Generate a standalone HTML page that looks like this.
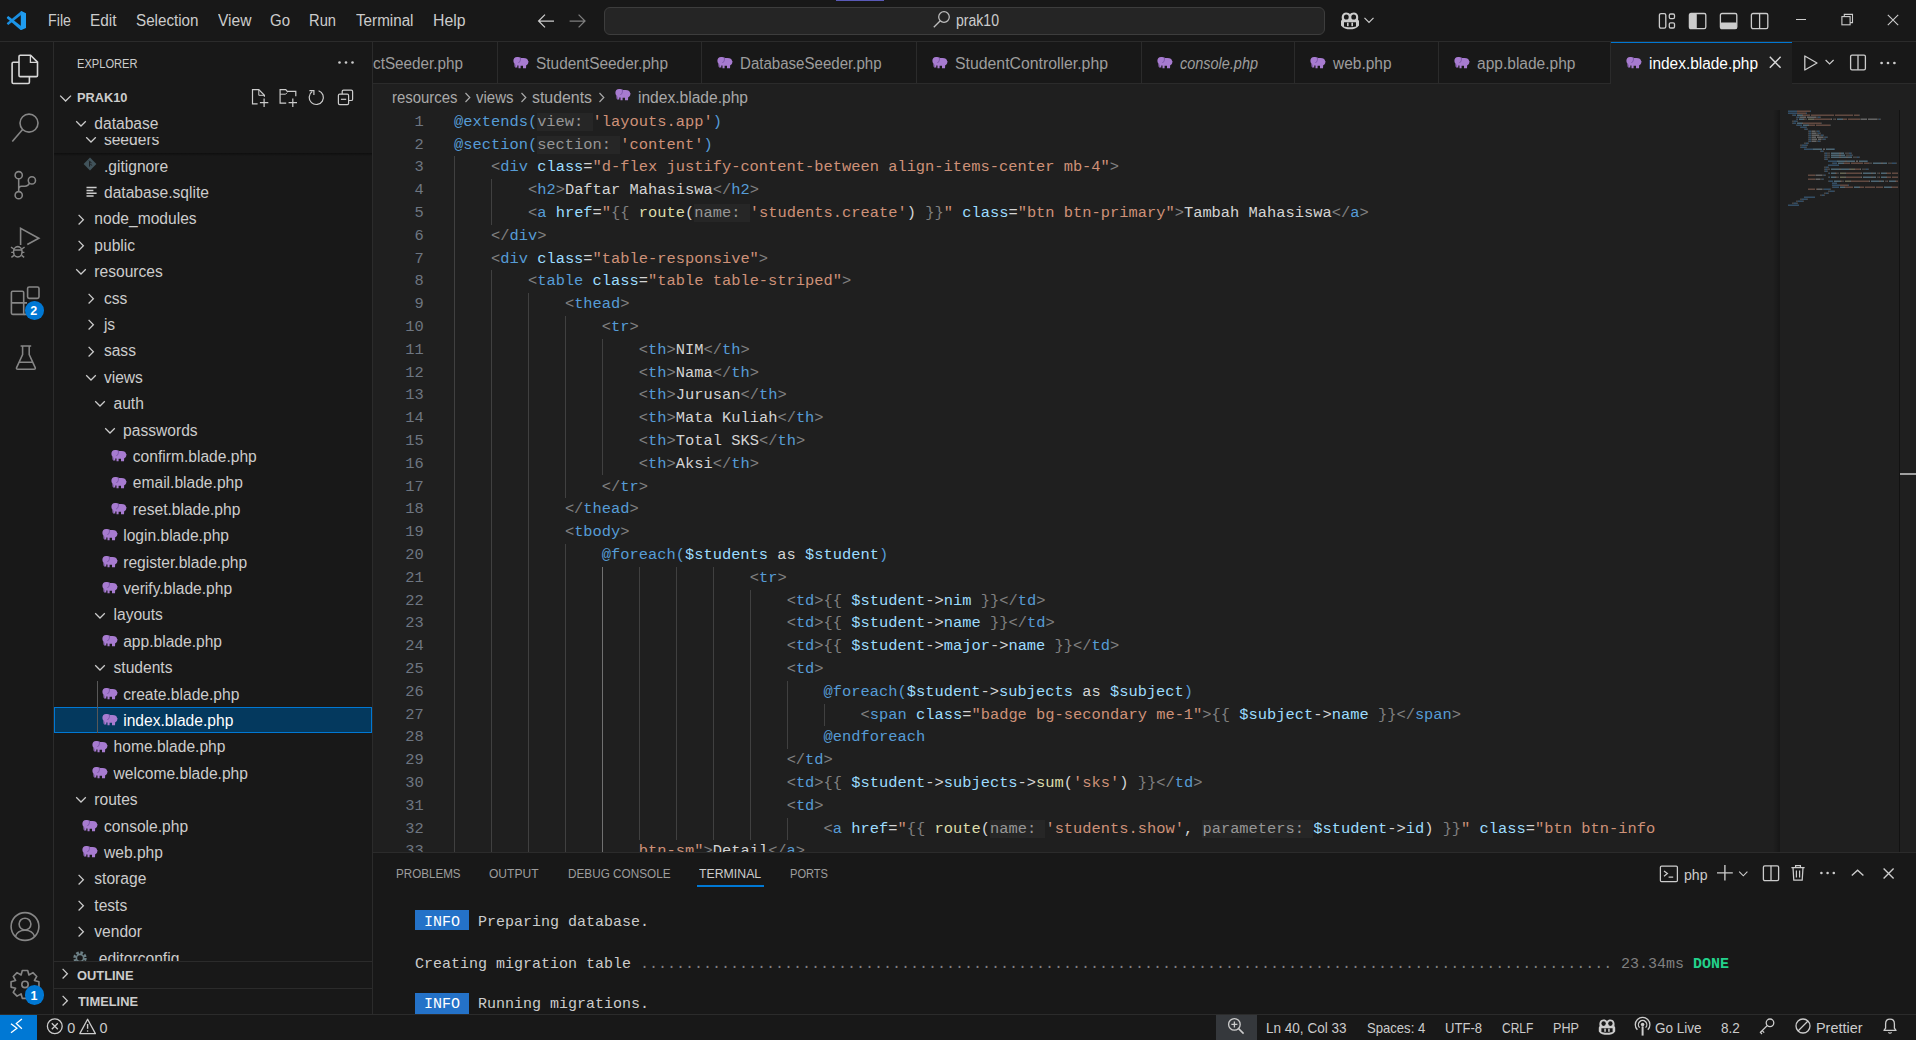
<!DOCTYPE html>
<html><head><meta charset="utf-8"><title>VS Code</title>
<style>
*{margin:0;padding:0;box-sizing:border-box}
html,body{width:1916px;height:1040px;overflow:hidden;background:#181818;font-family:'Liberation Sans',sans-serif;color:#cccccc}
.t{position:absolute;white-space:pre}
.r{position:absolute}
.s{position:absolute;overflow:visible}
.clip{position:absolute;overflow:hidden}
</style></head><body>
<div class="r" style="left:0px;top:0px;width:1916px;height:1040px;background:#181818;"></div><div class="r" style="left:373px;top:84px;width:1543px;height:768px;background:#1f1f1f;"></div><div class="r" style="left:0px;top:41px;width:1916px;height:1px;background:#2b2b2b;"></div><div class="r" style="left:53px;top:42px;width:1px;height:972px;background:#2b2b2b;"></div><div class="r" style="left:372px;top:42px;width:1px;height:972px;background:#2b2b2b;"></div><div class="r" style="left:373px;top:852px;width:1543px;height:1px;background:#2b2b2b;"></div><div class="r" style="left:0px;top:1014px;width:1916px;height:1px;background:#2b2b2b;"></div><svg class="s" style="left:4px;top:8px;" width="26" height="26" viewBox="0 0 26 26"><g stroke-linecap="butt"><path d="M16.8 3.2 L17.4 2.9 L22 5.2 L22 19.9 L17.4 21.9 L16.8 21.6 Z" fill="#1f9cf0"/><path d="M17.4 2.9 L17.4 6.7 L4.3 17.1 L2.9 15.8 L2.9 14.9 Z" fill="#1a8ee0"/><path d="M2.9 9.3 L4.3 8.0 L17.4 18.2 L17.4 21.9 L16.6 21.9 L2.9 10.2 Z" fill="#1b95e8"/></g></svg><div class="t" style="left:47.80px;top:13.09px;font-size:15.6px;line-height:15.6px;color:#cccccc;transform:scaleX(0.9149);transform-origin:0 0">File</div><div class="t" style="left:90.40px;top:13.09px;font-size:15.6px;line-height:15.6px;color:#cccccc;transform:scaleX(0.9860);transform-origin:0 0">Edit</div><div class="t" style="left:135.50px;top:13.09px;font-size:15.6px;line-height:15.6px;color:#cccccc;transform:scaleX(0.9742);transform-origin:0 0">Selection</div><div class="t" style="left:217.70px;top:13.09px;font-size:15.6px;line-height:15.6px;color:#cccccc;transform:scaleX(0.9991);transform-origin:0 0">View</div><div class="t" style="left:269.60px;top:13.09px;font-size:15.6px;line-height:15.6px;color:#cccccc;transform:scaleX(0.9610);transform-origin:0 0">Go</div><div class="t" style="left:309.00px;top:13.09px;font-size:15.6px;line-height:15.6px;color:#cccccc;transform:scaleX(0.9437);transform-origin:0 0">Run</div><div class="t" style="left:355.60px;top:13.09px;font-size:15.6px;line-height:15.6px;color:#cccccc;transform:scaleX(0.9756);transform-origin:0 0">Terminal</div><div class="t" style="left:432.50px;top:13.09px;font-size:15.6px;line-height:15.6px;color:#cccccc;transform:scaleX(1.0132);transform-origin:0 0">Help</div><div class="r" style="left:836px;top:0px;width:48px;height:1.3px;background:#5a5ab8;"></div><svg class="s" style="left:536px;top:12px;" width="22" height="18" viewBox="0 0 22 18"><path d="M9 2.6 L2.6 9 L9 15.4 M2.6 9 H18" fill="none" stroke="#cccccc" stroke-width="1.25"/></svg><svg class="s" style="left:567px;top:12px;" width="22" height="18" viewBox="0 0 22 18"><path d="M11.6 2.6 L18 9 L11.6 15.4 M18 9 H2.6" fill="none" stroke="#7e7e7e" stroke-width="1.25"/></svg><div class="r" style="left:603.5px;top:6.5px;width:721px;height:28px;background:#252525;border:1px solid #3d3d3d;border-radius:6px"></div><svg class="s" style="left:930px;top:9px;" width="22" height="22" viewBox="0 0 22 22"><circle cx="14" cy="8" r="5.3" fill="none" stroke="#bdbdbd" stroke-width="1.25"/><path d="M10.3 11.7 L3.8 18.2" stroke="#bdbdbd" stroke-width="1.3" fill="none"/></svg><div class="t" style="left:955.50px;top:12.99px;font-size:15.6px;line-height:15.6px;color:#cccccc;transform:scaleX(0.9017);transform-origin:0 0">prak10</div><svg class="s" style="left:1338px;top:10px;" width="24" height="21" viewBox="0 0 24 21"><path d="M4 9.5 C3 5.5 5 2.5 8 2.5 C10 2.5 11.5 3.2 12 4.3 C12.5 3.2 14 2.5 16 2.5 C19 2.5 21 5.5 20 9.5 L21 11 L21 15.5 C19 18.5 15.5 19.3 12 19.3 C8.5 19.3 5 18.5 3 15.5 L3 11 Z" fill="#cccccc"/><ellipse cx="8.3" cy="7" rx="2.4" ry="2.6" fill="#181818"/><ellipse cx="15.7" cy="7" rx="2.4" ry="2.6" fill="#181818"/><path d="M6 12.2 H18 V16.5 C15.5 17.6 8.5 17.6 6 16.5 Z" fill="#181818"/><rect x="9" y="12.6" width="1.6" height="3.6" fill="#cccccc"/><rect x="13.4" y="12.6" width="1.6" height="3.6" fill="#cccccc"/></svg><svg class="s" style="left:1362px;top:14px;" width="14" height="12" viewBox="0 0 14 12"><path d="M2.5 3.8 L7 8.3 L11.5 3.8" fill="none" stroke="#cccccc" stroke-width="1.2"/></svg><svg class="s" style="left:1656px;top:10px;" width="22" height="21" viewBox="0 0 22 21"><rect x="3.4" y="3.6" width="6.4" height="14.6" rx="1.6" fill="none" stroke="#cccccc" stroke-width="1.3"/><rect x="13.3" y="4" width="5.2" height="4.6" rx="1.3" fill="none" stroke="#cccccc" stroke-width="1.3"/><rect x="13.3" y="12.8" width="5.2" height="5.2" rx="1.3" fill="none" stroke="#cccccc" stroke-width="1.3"/></svg><svg class="s" style="left:1686px;top:10px;" width="22" height="21" viewBox="0 0 22 21"><rect x="3.4" y="3.5" width="16.4" height="15.2" rx="1.6" fill="none" stroke="#cccccc" stroke-width="1.3"/><rect x="3.4" y="3.5" width="7.4" height="15.2" rx="1.2" fill="#cccccc"/></svg><svg class="s" style="left:1717px;top:10px;" width="22" height="21" viewBox="0 0 22 21"><rect x="3.4" y="3.5" width="16.4" height="15.2" rx="1.6" fill="none" stroke="#cccccc" stroke-width="1.3"/><rect x="3.4" y="12.6" width="16.4" height="6.1" rx="1.2" fill="#cccccc"/></svg><svg class="s" style="left:1748px;top:10px;" width="22" height="21" viewBox="0 0 22 21"><rect x="3.4" y="3.5" width="16.4" height="15.2" rx="1.6" fill="none" stroke="#cccccc" stroke-width="1.3"/><path d="M11.6 3.5 V18.7" stroke="#cccccc" stroke-width="1.3"/></svg><div class="r" style="left:1796px;top:19px;width:10.2px;height:1.2px;background:#cccccc;"></div><svg class="s" style="left:1840px;top:12px;" width="16" height="16" viewBox="0 0 16 16"><rect x="1.9" y="4.6" width="8.2" height="8.2" fill="none" stroke="#cccccc" stroke-width="1.1"/><path d="M4.3 4.6 V2.4 H12.5 V10.6 H10.1" fill="none" stroke="#cccccc" stroke-width="1.1"/></svg><svg class="s" style="left:1886px;top:13px;" width="14" height="14" viewBox="0 0 14 14"><path d="M1.8 1.8 L12.2 12.2 M12.2 1.8 L1.8 12.2" stroke="#cccccc" stroke-width="1.1"/></svg><svg class="s" style="left:8px;top:52px;" width="34" height="34" viewBox="0 0 34 34"><path d="M11 10.2 H5.3 Q4.1 10.2 4.1 11.4 V30.3 Q4.1 31.5 5.3 31.5 H20.2 Q21.4 31.5 21.4 30.3 V24.6" fill="none" stroke="#d7d7d7" stroke-width="1.6"/><path d="M12.2 3.3 H22.6 L29.5 10.2 V23.4 Q29.5 24.6 28.3 24.6 H12.2 Q11 24.6 11 23.4 V4.5 Q11 3.3 12.2 3.3 Z" fill="none" stroke="#d7d7d7" stroke-width="1.6"/><path d="M22.4 3.4 V10.4 H29.4" fill="none" stroke="#d7d7d7" stroke-width="1.3"/></svg><svg class="s" style="left:8px;top:110px;" width="34" height="34" viewBox="0 0 34 34"><circle cx="21" cy="13.1" r="9" fill="none" stroke="#868686" stroke-width="1.6"/><path d="M14.6 19.6 L4.3 31.6" stroke="#868686" stroke-width="1.6"/></svg><svg class="s" style="left:8px;top:168px;" width="34" height="34" viewBox="0 0 34 34"><circle cx="10.7" cy="7.2" r="3.6" fill="none" stroke="#868686" stroke-width="1.55"/><circle cx="23.9" cy="12.4" r="3.6" fill="none" stroke="#868686" stroke-width="1.55"/><circle cx="10.7" cy="27.2" r="3.6" fill="none" stroke="#868686" stroke-width="1.55"/><path d="M10.7 10.8 V23.6 M21.6 15.2 Q20 18.2 17 18.2 H13.4 Q11 18.2 10.7 20.6" fill="none" stroke="#868686" stroke-width="1.55"/></svg><svg class="s" style="left:8px;top:226px;" width="34" height="34" viewBox="0 0 34 34"><path d="M12.6 18.9 V2.4 L30.8 12.2 L19.3 18.5" fill="none" stroke="#868686" stroke-width="1.6" stroke-linejoin="miter"/><ellipse cx="9.8" cy="25.8" rx="4.3" ry="5.2" fill="none" stroke="#868686" stroke-width="1.55"/><path d="M5.6 24 H14 M3 21.2 L5.8 23 M16.6 21.2 L13.8 23 M3.2 26.4 H5.6 M14 26.4 H16.4 M3.4 31.4 L6 29.4 M16.2 31.4 L13.6 29.4" fill="none" stroke="#868686" stroke-width="1.4"/></svg><svg class="s" style="left:8px;top:284px;" width="34" height="34" viewBox="0 0 34 34"><path d="M3.4 8.6 Q3.4 7.3 4.7 7.3 H14.4 Q15.7 7.3 15.7 8.6 V30.4 H4.7 Q3.4 30.4 3.4 29.1 Z" fill="none" stroke="#868686" stroke-width="1.6"/><path d="M3.4 18.9 H19 M15.7 30.4 H21" fill="none" stroke="#868686" stroke-width="1.6"/><rect x="19.6" y="3" width="11.4" height="11.4" rx="1.6" fill="none" stroke="#868686" stroke-width="1.6"/></svg><div class="r" style="left:25px;top:301px;width:18.6px;height:18.6px;border-radius:50%;background:#0078d4"></div><div class="t" style="left:30.20px;top:305.02px;font-size:12.5px;line-height:12.5px;color:#ffffff;font-weight:bold;">2</div><svg class="s" style="left:10.6px;top:342px;" width="34" height="34" viewBox="0 0 34 34"><path d="M9.6 3.9 H20.2 M11.6 3.9 V12.6 L5.6 25.6 Q5 27.3 6.8 27.3 H23 Q24.8 27.3 24.2 25.6 L18.2 12.6 V3.9 M8.6 20.3 H21.2" fill="none" stroke="#868686" stroke-width="1.55"/></svg><svg class="s" style="left:8px;top:909px;" width="34" height="34" viewBox="0 0 34 34"><circle cx="17" cy="17.5" r="13.9" fill="none" stroke="#868686" stroke-width="1.6"/><circle cx="17" cy="15.1" r="5.9" fill="none" stroke="#868686" stroke-width="1.6"/><path d="M7.2 27.8 Q9.4 21.3 17 21.3 Q24.6 21.3 26.8 27.8" fill="none" stroke="#868686" stroke-width="1.6"/></svg><svg class="s" style="left:8px;top:968px;" width="34" height="34" viewBox="0 0 34 34"><path d="M30.94 13.69 L30.94 19.11 L26.42 20.30 L28.77 24.34 L24.94 28.17 L20.90 25.82 L19.71 30.34 L14.29 30.34 L13.10 25.82 L9.06 28.17 L5.23 24.34 L7.58 20.30 L3.06 19.11 L3.06 13.69 L7.58 12.50 L5.23 8.46 L9.06 4.63 L13.10 6.98 L14.29 2.46 L19.71 2.46 L20.90 6.98 L24.94 4.63 L28.77 8.46 L26.42 12.50 Z" fill="none" stroke="#868686" stroke-width="1.6" stroke-linejoin="round"/><circle cx="17" cy="16.4" r="3.2" fill="none" stroke="#868686" stroke-width="1.6"/></svg><div class="r" style="left:24.5px;top:985px;width:19.6px;height:19.6px;border-radius:50%;background:#0078d4"></div><div class="t" style="left:30.60px;top:989.62px;font-size:12.5px;line-height:12.5px;color:#ffffff;font-weight:bold;">1</div><div class="t" style="left:77.20px;top:57.02px;font-size:13.2px;line-height:13.2px;color:#cccccc;transform:scaleX(0.8423);transform-origin:0 0">EXPLORER</div><svg class="s" style="left:336px;top:56px;" width="20" height="12" viewBox="0 0 20 12"><circle cx="3.5" cy="6.5" r="1.3" fill="#cccccc"/><circle cx="10" cy="6.5" r="1.3" fill="#cccccc"/><circle cx="16.5" cy="6.5" r="1.3" fill="#cccccc"/></svg><svg class="s" style="left:58.6px;top:91.5px;" width="14" height="12" viewBox="0 0 14 12"><path d="M1.2 3.6 L6.6 9 L12 3.6" fill="none" stroke="#cccccc" stroke-width="1.3"/></svg><div class="t" style="left:77.30px;top:91.02px;font-size:13.2px;line-height:13.2px;color:#cccccc;font-weight:bold;transform:scaleX(0.9703);transform-origin:0 0">PRAK10</div><svg class="s" style="left:240px;top:82px;" width="132" height="30" viewBox="0 0 132 30"><g fill="none" stroke="#cccccc" stroke-width="1.2"><path d="M17.6 21.9 H12.5 V7.7 H18.8 L24.4 13.3 V14.8"/><path d="M18.8 7.9 V13.3 H24.2" stroke-width="1.0"/><path d="M24.1 16.5 V24.9 M19.9 20.7 H28.3"/><path d="M46.2 21.2 H40.1 V7.7 H45.8 L47.2 9.3 H55.8 V14.2"/><path d="M40.1 12.2 H45.6 L47.2 10.6" stroke-width="1.0"/><path d="M52.8 16.5 V24.9 M48.6 20.7 H57"/><path d="M72.2 9.6 A7.1 7.1 0 1 0 78.6 8.7"/><path d="M69.4 8.7 H73.9 V13.1"/><rect x="102.2" y="8.1" width="10.4" height="10.4" rx="1.3"/><rect x="98.4" y="12.2" width="10.2" height="10.4" rx="1.3" fill="#181818"/><path d="M100.9 17.3 H106.2"/></g></svg><div style="position:absolute;left:0;top:0;width:1916px;height:1040px;clip-path:inset(153px 1544px 79px 54px)"><svg class="s" style="left:81.8px;top:156.29999999999998px;" width="16" height="16" viewBox="0 0 16 16"><path d="M8 1.6 L14.4 8 L8 14.4 L1.6 8 Z" fill="#41535b"/><path d="M7 4.6 L9.6 7.2 M7.6 5.6 V10.6 M8.4 7.8 L9.8 9.6" stroke="#181818" stroke-width="0.9" fill="none"/></svg><div class="t" style="left:104.00px;top:158.59px;font-size:15.6px;line-height:15.6px;color:#cccccc;">.gitignore</div><svg class="s" style="left:85.8px;top:185.9px;" width="12" height="12" viewBox="0 0 12 12"><path d="M0.5 1.6 H10.6 M0.5 4.4 H7.4 M0.5 7.2 H10.6 M0.5 10 H7.6" stroke="#cccccc" stroke-width="1.5"/></svg><div class="t" style="left:104.00px;top:184.99px;font-size:15.6px;line-height:15.6px;color:#cccccc;">database.sqlite</div><svg class="s" style="left:75.0px;top:213.5px;" width="12" height="11" viewBox="0 0 12 11"><path d="M3.6 0.9 L8.4 5.7 L3.6 10.5" fill="none" stroke="#cccccc" stroke-width="1.25"/></svg><div class="t" style="left:94.30px;top:211.39px;font-size:15.6px;line-height:15.6px;color:#cccccc;">node_modules</div><svg class="s" style="left:75.0px;top:239.89999999999998px;" width="12" height="11" viewBox="0 0 12 11"><path d="M3.6 0.9 L8.4 5.7 L3.6 10.5" fill="none" stroke="#cccccc" stroke-width="1.25"/></svg><div class="t" style="left:94.30px;top:237.79px;font-size:15.6px;line-height:15.6px;color:#cccccc;">public</div><svg class="s" style="left:75.0px;top:266.29999999999995px;" width="12" height="11" viewBox="0 0 12 11"><path d="M1.2 3.2 L6 8 L10.8 3.2" fill="none" stroke="#cccccc" stroke-width="1.25"/></svg><div class="t" style="left:94.30px;top:264.19px;font-size:15.6px;line-height:15.6px;color:#cccccc;">resources</div><svg class="s" style="left:84.6px;top:292.7px;" width="12" height="11" viewBox="0 0 12 11"><path d="M3.6 0.9 L8.4 5.7 L3.6 10.5" fill="none" stroke="#cccccc" stroke-width="1.25"/></svg><div class="t" style="left:103.90px;top:290.59px;font-size:15.6px;line-height:15.6px;color:#cccccc;">css</div><svg class="s" style="left:84.6px;top:319.09999999999997px;" width="12" height="11" viewBox="0 0 12 11"><path d="M3.6 0.9 L8.4 5.7 L3.6 10.5" fill="none" stroke="#cccccc" stroke-width="1.25"/></svg><div class="t" style="left:103.90px;top:316.99px;font-size:15.6px;line-height:15.6px;color:#cccccc;">js</div><svg class="s" style="left:84.6px;top:345.5px;" width="12" height="11" viewBox="0 0 12 11"><path d="M3.6 0.9 L8.4 5.7 L3.6 10.5" fill="none" stroke="#cccccc" stroke-width="1.25"/></svg><div class="t" style="left:103.90px;top:343.39px;font-size:15.6px;line-height:15.6px;color:#cccccc;">sass</div><svg class="s" style="left:84.6px;top:371.9px;" width="12" height="11" viewBox="0 0 12 11"><path d="M1.2 3.2 L6 8 L10.8 3.2" fill="none" stroke="#cccccc" stroke-width="1.25"/></svg><div class="t" style="left:103.90px;top:369.79px;font-size:15.6px;line-height:15.6px;color:#cccccc;">views</div><svg class="s" style="left:94.2px;top:398.29999999999995px;" width="12" height="11" viewBox="0 0 12 11"><path d="M1.2 3.2 L6 8 L10.8 3.2" fill="none" stroke="#cccccc" stroke-width="1.25"/></svg><div class="t" style="left:113.50px;top:396.19px;font-size:15.6px;line-height:15.6px;color:#cccccc;">auth</div><svg class="s" style="left:103.8px;top:424.7px;" width="12" height="11" viewBox="0 0 12 11"><path d="M1.2 3.2 L6 8 L10.8 3.2" fill="none" stroke="#cccccc" stroke-width="1.25"/></svg><div class="t" style="left:123.10px;top:422.59px;font-size:15.6px;line-height:15.6px;color:#cccccc;">passwords</div><svg class="s" style="left:111.1px;top:450.19999999999993px;" width="16" height="12" viewBox="0 0 16 12"><path d="M4 0 C1.8 0 0.4 1.6 0.4 3.8 C0.4 5 0.9 6 1.4 6.6 L1.6 9.6 L2.4 10.6 L4.3 10.6 L4.3 8.6 L5.5 8.6 L5.5 11.2 L7.6 11.2 L7.6 8.8 L10 8.8 L10 11.2 L13 11.2 L13.2 8.2 C14.6 7.6 15.3 6.4 15.3 5.2 L15.8 4.8 L15.2 4.2 C14.8 2.2 13.4 1 10.5 1 L8 1 C7 0.3 5.6 0 4 0 Z" fill="#a77bd0"/><path d="M7.3 0.8 C7.7 2.6 7.3 4.6 5.4 6" fill="none" stroke="#7650a4" stroke-width="0.9"/><path d="M2.4 7.6 L2.5 10.4" fill="none" stroke="#6e4c98" stroke-width="0.6"/></svg><div class="t" style="left:132.80px;top:448.99px;font-size:15.6px;line-height:15.6px;color:#cccccc;">confirm.blade.php</div><svg class="s" style="left:111.1px;top:476.5999999999999px;" width="16" height="12" viewBox="0 0 16 12"><path d="M4 0 C1.8 0 0.4 1.6 0.4 3.8 C0.4 5 0.9 6 1.4 6.6 L1.6 9.6 L2.4 10.6 L4.3 10.6 L4.3 8.6 L5.5 8.6 L5.5 11.2 L7.6 11.2 L7.6 8.8 L10 8.8 L10 11.2 L13 11.2 L13.2 8.2 C14.6 7.6 15.3 6.4 15.3 5.2 L15.8 4.8 L15.2 4.2 C14.8 2.2 13.4 1 10.5 1 L8 1 C7 0.3 5.6 0 4 0 Z" fill="#a77bd0"/><path d="M7.3 0.8 C7.7 2.6 7.3 4.6 5.4 6" fill="none" stroke="#7650a4" stroke-width="0.9"/><path d="M2.4 7.6 L2.5 10.4" fill="none" stroke="#6e4c98" stroke-width="0.6"/></svg><div class="t" style="left:132.80px;top:475.39px;font-size:15.6px;line-height:15.6px;color:#cccccc;">email.blade.php</div><svg class="s" style="left:111.1px;top:502.99999999999994px;" width="16" height="12" viewBox="0 0 16 12"><path d="M4 0 C1.8 0 0.4 1.6 0.4 3.8 C0.4 5 0.9 6 1.4 6.6 L1.6 9.6 L2.4 10.6 L4.3 10.6 L4.3 8.6 L5.5 8.6 L5.5 11.2 L7.6 11.2 L7.6 8.8 L10 8.8 L10 11.2 L13 11.2 L13.2 8.2 C14.6 7.6 15.3 6.4 15.3 5.2 L15.8 4.8 L15.2 4.2 C14.8 2.2 13.4 1 10.5 1 L8 1 C7 0.3 5.6 0 4 0 Z" fill="#a77bd0"/><path d="M7.3 0.8 C7.7 2.6 7.3 4.6 5.4 6" fill="none" stroke="#7650a4" stroke-width="0.9"/><path d="M2.4 7.6 L2.5 10.4" fill="none" stroke="#6e4c98" stroke-width="0.6"/></svg><div class="t" style="left:132.80px;top:501.79px;font-size:15.6px;line-height:15.6px;color:#cccccc;">reset.blade.php</div><svg class="s" style="left:101.5px;top:529.4px;" width="16" height="12" viewBox="0 0 16 12"><path d="M4 0 C1.8 0 0.4 1.6 0.4 3.8 C0.4 5 0.9 6 1.4 6.6 L1.6 9.6 L2.4 10.6 L4.3 10.6 L4.3 8.6 L5.5 8.6 L5.5 11.2 L7.6 11.2 L7.6 8.8 L10 8.8 L10 11.2 L13 11.2 L13.2 8.2 C14.6 7.6 15.3 6.4 15.3 5.2 L15.8 4.8 L15.2 4.2 C14.8 2.2 13.4 1 10.5 1 L8 1 C7 0.3 5.6 0 4 0 Z" fill="#a77bd0"/><path d="M7.3 0.8 C7.7 2.6 7.3 4.6 5.4 6" fill="none" stroke="#7650a4" stroke-width="0.9"/><path d="M2.4 7.6 L2.5 10.4" fill="none" stroke="#6e4c98" stroke-width="0.6"/></svg><div class="t" style="left:123.20px;top:528.19px;font-size:15.6px;line-height:15.6px;color:#cccccc;">login.blade.php</div><svg class="s" style="left:101.5px;top:555.8000000000001px;" width="16" height="12" viewBox="0 0 16 12"><path d="M4 0 C1.8 0 0.4 1.6 0.4 3.8 C0.4 5 0.9 6 1.4 6.6 L1.6 9.6 L2.4 10.6 L4.3 10.6 L4.3 8.6 L5.5 8.6 L5.5 11.2 L7.6 11.2 L7.6 8.8 L10 8.8 L10 11.2 L13 11.2 L13.2 8.2 C14.6 7.6 15.3 6.4 15.3 5.2 L15.8 4.8 L15.2 4.2 C14.8 2.2 13.4 1 10.5 1 L8 1 C7 0.3 5.6 0 4 0 Z" fill="#a77bd0"/><path d="M7.3 0.8 C7.7 2.6 7.3 4.6 5.4 6" fill="none" stroke="#7650a4" stroke-width="0.9"/><path d="M2.4 7.6 L2.5 10.4" fill="none" stroke="#6e4c98" stroke-width="0.6"/></svg><div class="t" style="left:123.20px;top:554.59px;font-size:15.6px;line-height:15.6px;color:#cccccc;">register.blade.php</div><svg class="s" style="left:101.5px;top:582.1999999999999px;" width="16" height="12" viewBox="0 0 16 12"><path d="M4 0 C1.8 0 0.4 1.6 0.4 3.8 C0.4 5 0.9 6 1.4 6.6 L1.6 9.6 L2.4 10.6 L4.3 10.6 L4.3 8.6 L5.5 8.6 L5.5 11.2 L7.6 11.2 L7.6 8.8 L10 8.8 L10 11.2 L13 11.2 L13.2 8.2 C14.6 7.6 15.3 6.4 15.3 5.2 L15.8 4.8 L15.2 4.2 C14.8 2.2 13.4 1 10.5 1 L8 1 C7 0.3 5.6 0 4 0 Z" fill="#a77bd0"/><path d="M7.3 0.8 C7.7 2.6 7.3 4.6 5.4 6" fill="none" stroke="#7650a4" stroke-width="0.9"/><path d="M2.4 7.6 L2.5 10.4" fill="none" stroke="#6e4c98" stroke-width="0.6"/></svg><div class="t" style="left:123.20px;top:580.99px;font-size:15.6px;line-height:15.6px;color:#cccccc;">verify.blade.php</div><svg class="s" style="left:94.2px;top:609.5px;" width="12" height="11" viewBox="0 0 12 11"><path d="M1.2 3.2 L6 8 L10.8 3.2" fill="none" stroke="#cccccc" stroke-width="1.25"/></svg><div class="t" style="left:113.50px;top:607.39px;font-size:15.6px;line-height:15.6px;color:#cccccc;">layouts</div><svg class="s" style="left:101.5px;top:635.0px;" width="16" height="12" viewBox="0 0 16 12"><path d="M4 0 C1.8 0 0.4 1.6 0.4 3.8 C0.4 5 0.9 6 1.4 6.6 L1.6 9.6 L2.4 10.6 L4.3 10.6 L4.3 8.6 L5.5 8.6 L5.5 11.2 L7.6 11.2 L7.6 8.8 L10 8.8 L10 11.2 L13 11.2 L13.2 8.2 C14.6 7.6 15.3 6.4 15.3 5.2 L15.8 4.8 L15.2 4.2 C14.8 2.2 13.4 1 10.5 1 L8 1 C7 0.3 5.6 0 4 0 Z" fill="#a77bd0"/><path d="M7.3 0.8 C7.7 2.6 7.3 4.6 5.4 6" fill="none" stroke="#7650a4" stroke-width="0.9"/><path d="M2.4 7.6 L2.5 10.4" fill="none" stroke="#6e4c98" stroke-width="0.6"/></svg><div class="t" style="left:123.20px;top:633.79px;font-size:15.6px;line-height:15.6px;color:#cccccc;">app.blade.php</div><svg class="s" style="left:94.2px;top:662.3px;" width="12" height="11" viewBox="0 0 12 11"><path d="M1.2 3.2 L6 8 L10.8 3.2" fill="none" stroke="#cccccc" stroke-width="1.25"/></svg><div class="t" style="left:113.50px;top:660.19px;font-size:15.6px;line-height:15.6px;color:#cccccc;">students</div><svg class="s" style="left:101.5px;top:687.8000000000001px;" width="16" height="12" viewBox="0 0 16 12"><path d="M4 0 C1.8 0 0.4 1.6 0.4 3.8 C0.4 5 0.9 6 1.4 6.6 L1.6 9.6 L2.4 10.6 L4.3 10.6 L4.3 8.6 L5.5 8.6 L5.5 11.2 L7.6 11.2 L7.6 8.8 L10 8.8 L10 11.2 L13 11.2 L13.2 8.2 C14.6 7.6 15.3 6.4 15.3 5.2 L15.8 4.8 L15.2 4.2 C14.8 2.2 13.4 1 10.5 1 L8 1 C7 0.3 5.6 0 4 0 Z" fill="#a77bd0"/><path d="M7.3 0.8 C7.7 2.6 7.3 4.6 5.4 6" fill="none" stroke="#7650a4" stroke-width="0.9"/><path d="M2.4 7.6 L2.5 10.4" fill="none" stroke="#6e4c98" stroke-width="0.6"/></svg><div class="t" style="left:123.20px;top:686.59px;font-size:15.6px;line-height:15.6px;color:#cccccc;">create.blade.php</div><div class="r" style="left:54px;top:707.10px;width:318px;height:26.4px;background:#04395e;border:1px solid #0078d4"></div><div class="r" style="left:97px;top:680.7px;width:1px;height:52.8px;background:#585858;"></div><svg class="s" style="left:101.5px;top:714.1999999999999px;" width="16" height="12" viewBox="0 0 16 12"><path d="M4 0 C1.8 0 0.4 1.6 0.4 3.8 C0.4 5 0.9 6 1.4 6.6 L1.6 9.6 L2.4 10.6 L4.3 10.6 L4.3 8.6 L5.5 8.6 L5.5 11.2 L7.6 11.2 L7.6 8.8 L10 8.8 L10 11.2 L13 11.2 L13.2 8.2 C14.6 7.6 15.3 6.4 15.3 5.2 L15.8 4.8 L15.2 4.2 C14.8 2.2 13.4 1 10.5 1 L8 1 C7 0.3 5.6 0 4 0 Z" fill="#a77bd0"/><path d="M7.3 0.8 C7.7 2.6 7.3 4.6 5.4 6" fill="none" stroke="#7650a4" stroke-width="0.9"/><path d="M2.4 7.6 L2.5 10.4" fill="none" stroke="#6e4c98" stroke-width="0.6"/></svg><div class="t" style="left:123.20px;top:712.99px;font-size:15.6px;line-height:15.6px;color:#ffffff;">index.blade.php</div><svg class="s" style="left:91.89999999999999px;top:740.6px;" width="16" height="12" viewBox="0 0 16 12"><path d="M4 0 C1.8 0 0.4 1.6 0.4 3.8 C0.4 5 0.9 6 1.4 6.6 L1.6 9.6 L2.4 10.6 L4.3 10.6 L4.3 8.6 L5.5 8.6 L5.5 11.2 L7.6 11.2 L7.6 8.8 L10 8.8 L10 11.2 L13 11.2 L13.2 8.2 C14.6 7.6 15.3 6.4 15.3 5.2 L15.8 4.8 L15.2 4.2 C14.8 2.2 13.4 1 10.5 1 L8 1 C7 0.3 5.6 0 4 0 Z" fill="#a77bd0"/><path d="M7.3 0.8 C7.7 2.6 7.3 4.6 5.4 6" fill="none" stroke="#7650a4" stroke-width="0.9"/><path d="M2.4 7.6 L2.5 10.4" fill="none" stroke="#6e4c98" stroke-width="0.6"/></svg><div class="t" style="left:113.60px;top:739.39px;font-size:15.6px;line-height:15.6px;color:#cccccc;">home.blade.php</div><svg class="s" style="left:91.89999999999999px;top:766.9999999999999px;" width="16" height="12" viewBox="0 0 16 12"><path d="M4 0 C1.8 0 0.4 1.6 0.4 3.8 C0.4 5 0.9 6 1.4 6.6 L1.6 9.6 L2.4 10.6 L4.3 10.6 L4.3 8.6 L5.5 8.6 L5.5 11.2 L7.6 11.2 L7.6 8.8 L10 8.8 L10 11.2 L13 11.2 L13.2 8.2 C14.6 7.6 15.3 6.4 15.3 5.2 L15.8 4.8 L15.2 4.2 C14.8 2.2 13.4 1 10.5 1 L8 1 C7 0.3 5.6 0 4 0 Z" fill="#a77bd0"/><path d="M7.3 0.8 C7.7 2.6 7.3 4.6 5.4 6" fill="none" stroke="#7650a4" stroke-width="0.9"/><path d="M2.4 7.6 L2.5 10.4" fill="none" stroke="#6e4c98" stroke-width="0.6"/></svg><div class="t" style="left:113.60px;top:765.79px;font-size:15.6px;line-height:15.6px;color:#cccccc;">welcome.blade.php</div><svg class="s" style="left:75.0px;top:794.3px;" width="12" height="11" viewBox="0 0 12 11"><path d="M1.2 3.2 L6 8 L10.8 3.2" fill="none" stroke="#cccccc" stroke-width="1.25"/></svg><div class="t" style="left:94.30px;top:792.19px;font-size:15.6px;line-height:15.6px;color:#cccccc;">routes</div><svg class="s" style="left:82.3px;top:819.8000000000001px;" width="16" height="12" viewBox="0 0 16 12"><path d="M4 0 C1.8 0 0.4 1.6 0.4 3.8 C0.4 5 0.9 6 1.4 6.6 L1.6 9.6 L2.4 10.6 L4.3 10.6 L4.3 8.6 L5.5 8.6 L5.5 11.2 L7.6 11.2 L7.6 8.8 L10 8.8 L10 11.2 L13 11.2 L13.2 8.2 C14.6 7.6 15.3 6.4 15.3 5.2 L15.8 4.8 L15.2 4.2 C14.8 2.2 13.4 1 10.5 1 L8 1 C7 0.3 5.6 0 4 0 Z" fill="#a77bd0"/><path d="M7.3 0.8 C7.7 2.6 7.3 4.6 5.4 6" fill="none" stroke="#7650a4" stroke-width="0.9"/><path d="M2.4 7.6 L2.5 10.4" fill="none" stroke="#6e4c98" stroke-width="0.6"/></svg><div class="t" style="left:104.00px;top:818.59px;font-size:15.6px;line-height:15.6px;color:#cccccc;">console.php</div><svg class="s" style="left:82.3px;top:846.1999999999999px;" width="16" height="12" viewBox="0 0 16 12"><path d="M4 0 C1.8 0 0.4 1.6 0.4 3.8 C0.4 5 0.9 6 1.4 6.6 L1.6 9.6 L2.4 10.6 L4.3 10.6 L4.3 8.6 L5.5 8.6 L5.5 11.2 L7.6 11.2 L7.6 8.8 L10 8.8 L10 11.2 L13 11.2 L13.2 8.2 C14.6 7.6 15.3 6.4 15.3 5.2 L15.8 4.8 L15.2 4.2 C14.8 2.2 13.4 1 10.5 1 L8 1 C7 0.3 5.6 0 4 0 Z" fill="#a77bd0"/><path d="M7.3 0.8 C7.7 2.6 7.3 4.6 5.4 6" fill="none" stroke="#7650a4" stroke-width="0.9"/><path d="M2.4 7.6 L2.5 10.4" fill="none" stroke="#6e4c98" stroke-width="0.6"/></svg><div class="t" style="left:104.00px;top:844.99px;font-size:15.6px;line-height:15.6px;color:#cccccc;">web.php</div><svg class="s" style="left:75.0px;top:873.5px;" width="12" height="11" viewBox="0 0 12 11"><path d="M3.6 0.9 L8.4 5.7 L3.6 10.5" fill="none" stroke="#cccccc" stroke-width="1.25"/></svg><div class="t" style="left:94.30px;top:871.39px;font-size:15.6px;line-height:15.6px;color:#cccccc;">storage</div><svg class="s" style="left:75.0px;top:899.8999999999999px;" width="12" height="11" viewBox="0 0 12 11"><path d="M3.6 0.9 L8.4 5.7 L3.6 10.5" fill="none" stroke="#cccccc" stroke-width="1.25"/></svg><div class="t" style="left:94.30px;top:897.79px;font-size:15.6px;line-height:15.6px;color:#cccccc;">tests</div><svg class="s" style="left:75.0px;top:926.3px;" width="12" height="11" viewBox="0 0 12 11"><path d="M3.6 0.9 L8.4 5.7 L3.6 10.5" fill="none" stroke="#cccccc" stroke-width="1.25"/></svg><div class="t" style="left:94.30px;top:924.19px;font-size:15.6px;line-height:15.6px;color:#cccccc;">vendor</div><svg class="s" style="left:71.7px;top:949.7px;" width="16" height="16" viewBox="0 0 16 16"><circle cx="8" cy="8" r="5.4" fill="none" stroke="#6d8086" stroke-width="2.6" stroke-dasharray="2.6 1.6"/><circle cx="8" cy="8" r="3.6" fill="none" stroke="#6d8086" stroke-width="1.6"/></svg><div class="t" style="left:94.40px;top:950.59px;font-size:15.6px;line-height:15.6px;color:#cccccc;">.editorconfig</div></div><div class="r" style="left:54px;top:110px;width:318px;height:43.5px;background:#181818;"></div><svg class="s" style="left:84.6px;top:133.8px;" width="12" height="11" viewBox="0 0 12 11"><path d="M1.2 3.2 L6 8 L10.8 3.2" fill="none" stroke="#cccccc" stroke-width="1.25"/></svg><div class="t" style="left:103.90px;top:132.19px;font-size:15.6px;line-height:15.6px;color:#cccccc;">seeders</div><div class="r" style="left:54px;top:110px;width:318px;height:26.8px;background:#181818;"></div><svg class="s" style="left:75.0px;top:118.4px;" width="12" height="11" viewBox="0 0 12 11"><path d="M1.2 3.2 L6 8 L10.8 3.2" fill="none" stroke="#cccccc" stroke-width="1.25"/></svg><div class="t" style="left:94.30px;top:116.49px;font-size:15.6px;line-height:15.6px;color:#cccccc;">database</div><div class="r" style="left:54px;top:152.5px;width:318px;height:3px;background:linear-gradient(#0e0e0e,rgba(24,24,24,0))"></div><div class="r" style="left:54px;top:961px;width:318px;height:1px;background:#2b2b2b;"></div><div class="r" style="left:54px;top:988px;width:318px;height:1px;background:#2b2b2b;"></div><svg class="s" style="left:59px;top:968px;" width="12" height="12" viewBox="0 0 12 12"><path d="M3.6 0.9 L8.4 5.7 L3.6 10.5" fill="none" stroke="#cccccc" stroke-width="1.25"/></svg><div class="t" style="left:77.30px;top:969.02px;font-size:13.2px;line-height:13.2px;color:#cccccc;font-weight:bold;transform:scaleX(0.9760);transform-origin:0 0">OUTLINE</div><svg class="s" style="left:59px;top:995px;" width="12" height="12" viewBox="0 0 12 12"><path d="M3.6 0.9 L8.4 5.7 L3.6 10.5" fill="none" stroke="#cccccc" stroke-width="1.25"/></svg><div class="t" style="left:77.60px;top:995.12px;font-size:13.2px;line-height:13.2px;color:#cccccc;font-weight:bold;transform:scaleX(0.9749);transform-origin:0 0">TIMELINE</div><div class="r" style="left:373px;top:83px;width:1543px;height:1px;background:#2b2b2b;"></div><div class="r" style="left:497px;top:42px;width:1px;height:41px;background:#2b2b2b;"></div><div class="t" style="left:373.00px;top:55.99px;font-size:15.6px;line-height:15.6px;color:#9d9d9d;transform:scaleX(0.9793);transform-origin:0 0">ctSeeder.php</div><div class="r" style="left:701px;top:42px;width:1px;height:41px;background:#2b2b2b;"></div><svg class="s" style="left:513.3px;top:56.7px;" width="16" height="12" viewBox="0 0 16 12"><path d="M4 0 C1.8 0 0.4 1.6 0.4 3.8 C0.4 5 0.9 6 1.4 6.6 L1.6 9.6 L2.4 10.6 L4.3 10.6 L4.3 8.6 L5.5 8.6 L5.5 11.2 L7.6 11.2 L7.6 8.8 L10 8.8 L10 11.2 L13 11.2 L13.2 8.2 C14.6 7.6 15.3 6.4 15.3 5.2 L15.8 4.8 L15.2 4.2 C14.8 2.2 13.4 1 10.5 1 L8 1 C7 0.3 5.6 0 4 0 Z" fill="#a77bd0"/><path d="M7.3 0.8 C7.7 2.6 7.3 4.6 5.4 6" fill="none" stroke="#7650a4" stroke-width="0.9"/><path d="M2.4 7.6 L2.5 10.4" fill="none" stroke="#6e4c98" stroke-width="0.6"/></svg><div class="t" style="left:536.30px;top:55.99px;font-size:15.6px;line-height:15.6px;color:#9d9d9d;transform:scaleX(0.9885);transform-origin:0 0">StudentSeeder.php</div><div class="r" style="left:916px;top:42px;width:1px;height:41px;background:#2b2b2b;"></div><svg class="s" style="left:716.8px;top:56.7px;" width="16" height="12" viewBox="0 0 16 12"><path d="M4 0 C1.8 0 0.4 1.6 0.4 3.8 C0.4 5 0.9 6 1.4 6.6 L1.6 9.6 L2.4 10.6 L4.3 10.6 L4.3 8.6 L5.5 8.6 L5.5 11.2 L7.6 11.2 L7.6 8.8 L10 8.8 L10 11.2 L13 11.2 L13.2 8.2 C14.6 7.6 15.3 6.4 15.3 5.2 L15.8 4.8 L15.2 4.2 C14.8 2.2 13.4 1 10.5 1 L8 1 C7 0.3 5.6 0 4 0 Z" fill="#a77bd0"/><path d="M7.3 0.8 C7.7 2.6 7.3 4.6 5.4 6" fill="none" stroke="#7650a4" stroke-width="0.9"/><path d="M2.4 7.6 L2.5 10.4" fill="none" stroke="#6e4c98" stroke-width="0.6"/></svg><div class="t" style="left:739.80px;top:55.99px;font-size:15.6px;line-height:15.6px;color:#9d9d9d;transform:scaleX(0.9657);transform-origin:0 0">DatabaseSeeder.php</div><div class="r" style="left:1141px;top:42px;width:1px;height:41px;background:#2b2b2b;"></div><svg class="s" style="left:931.9px;top:56.7px;" width="16" height="12" viewBox="0 0 16 12"><path d="M4 0 C1.8 0 0.4 1.6 0.4 3.8 C0.4 5 0.9 6 1.4 6.6 L1.6 9.6 L2.4 10.6 L4.3 10.6 L4.3 8.6 L5.5 8.6 L5.5 11.2 L7.6 11.2 L7.6 8.8 L10 8.8 L10 11.2 L13 11.2 L13.2 8.2 C14.6 7.6 15.3 6.4 15.3 5.2 L15.8 4.8 L15.2 4.2 C14.8 2.2 13.4 1 10.5 1 L8 1 C7 0.3 5.6 0 4 0 Z" fill="#a77bd0"/><path d="M7.3 0.8 C7.7 2.6 7.3 4.6 5.4 6" fill="none" stroke="#7650a4" stroke-width="0.9"/><path d="M2.4 7.6 L2.5 10.4" fill="none" stroke="#6e4c98" stroke-width="0.6"/></svg><div class="t" style="left:954.90px;top:55.99px;font-size:15.6px;line-height:15.6px;color:#9d9d9d;transform:scaleX(1.0143);transform-origin:0 0">StudentController.php</div><div class="r" style="left:1294px;top:42px;width:1px;height:41px;background:#2b2b2b;"></div><svg class="s" style="left:1157.1px;top:56.7px;" width="16" height="12" viewBox="0 0 16 12"><path d="M4 0 C1.8 0 0.4 1.6 0.4 3.8 C0.4 5 0.9 6 1.4 6.6 L1.6 9.6 L2.4 10.6 L4.3 10.6 L4.3 8.6 L5.5 8.6 L5.5 11.2 L7.6 11.2 L7.6 8.8 L10 8.8 L10 11.2 L13 11.2 L13.2 8.2 C14.6 7.6 15.3 6.4 15.3 5.2 L15.8 4.8 L15.2 4.2 C14.8 2.2 13.4 1 10.5 1 L8 1 C7 0.3 5.6 0 4 0 Z" fill="#a77bd0"/><path d="M7.3 0.8 C7.7 2.6 7.3 4.6 5.4 6" fill="none" stroke="#7650a4" stroke-width="0.9"/><path d="M2.4 7.6 L2.5 10.4" fill="none" stroke="#6e4c98" stroke-width="0.6"/></svg><div class="t" style="left:1180.10px;top:55.99px;font-size:15.6px;line-height:15.6px;color:#9d9d9d;font-style:italic;transform:scaleX(0.9274);transform-origin:0 0">console.php</div><div class="r" style="left:1438px;top:42px;width:1px;height:41px;background:#2b2b2b;"></div><svg class="s" style="left:1310.0px;top:56.7px;" width="16" height="12" viewBox="0 0 16 12"><path d="M4 0 C1.8 0 0.4 1.6 0.4 3.8 C0.4 5 0.9 6 1.4 6.6 L1.6 9.6 L2.4 10.6 L4.3 10.6 L4.3 8.6 L5.5 8.6 L5.5 11.2 L7.6 11.2 L7.6 8.8 L10 8.8 L10 11.2 L13 11.2 L13.2 8.2 C14.6 7.6 15.3 6.4 15.3 5.2 L15.8 4.8 L15.2 4.2 C14.8 2.2 13.4 1 10.5 1 L8 1 C7 0.3 5.6 0 4 0 Z" fill="#a77bd0"/><path d="M7.3 0.8 C7.7 2.6 7.3 4.6 5.4 6" fill="none" stroke="#7650a4" stroke-width="0.9"/><path d="M2.4 7.6 L2.5 10.4" fill="none" stroke="#6e4c98" stroke-width="0.6"/></svg><div class="t" style="left:1333.00px;top:55.99px;font-size:15.6px;line-height:15.6px;color:#9d9d9d;transform:scaleX(0.9921);transform-origin:0 0">web.php</div><div class="r" style="left:1610px;top:42px;width:1px;height:41px;background:#2b2b2b;"></div><svg class="s" style="left:1454.2px;top:56.7px;" width="16" height="12" viewBox="0 0 16 12"><path d="M4 0 C1.8 0 0.4 1.6 0.4 3.8 C0.4 5 0.9 6 1.4 6.6 L1.6 9.6 L2.4 10.6 L4.3 10.6 L4.3 8.6 L5.5 8.6 L5.5 11.2 L7.6 11.2 L7.6 8.8 L10 8.8 L10 11.2 L13 11.2 L13.2 8.2 C14.6 7.6 15.3 6.4 15.3 5.2 L15.8 4.8 L15.2 4.2 C14.8 2.2 13.4 1 10.5 1 L8 1 C7 0.3 5.6 0 4 0 Z" fill="#a77bd0"/><path d="M7.3 0.8 C7.7 2.6 7.3 4.6 5.4 6" fill="none" stroke="#7650a4" stroke-width="0.9"/><path d="M2.4 7.6 L2.5 10.4" fill="none" stroke="#6e4c98" stroke-width="0.6"/></svg><div class="t" style="left:1477.20px;top:55.99px;font-size:15.6px;line-height:15.6px;color:#9d9d9d;transform:scaleX(0.9964);transform-origin:0 0">app.blade.php</div><div class="r" style="left:1611px;top:42px;width:181px;height:42px;background:#1f1f1f;"></div><div class="r" style="left:1611px;top:42px;width:181px;height:1.2px;background:#0078d4;"></div><svg class="s" style="left:1626px;top:56.7px;" width="16" height="12" viewBox="0 0 16 12"><path d="M4 0 C1.8 0 0.4 1.6 0.4 3.8 C0.4 5 0.9 6 1.4 6.6 L1.6 9.6 L2.4 10.6 L4.3 10.6 L4.3 8.6 L5.5 8.6 L5.5 11.2 L7.6 11.2 L7.6 8.8 L10 8.8 L10 11.2 L13 11.2 L13.2 8.2 C14.6 7.6 15.3 6.4 15.3 5.2 L15.8 4.8 L15.2 4.2 C14.8 2.2 13.4 1 10.5 1 L8 1 C7 0.3 5.6 0 4 0 Z" fill="#a77bd0"/><path d="M7.3 0.8 C7.7 2.6 7.3 4.6 5.4 6" fill="none" stroke="#7650a4" stroke-width="0.9"/><path d="M2.4 7.6 L2.5 10.4" fill="none" stroke="#6e4c98" stroke-width="0.6"/></svg><div class="t" style="left:1649.00px;top:55.99px;font-size:15.6px;line-height:15.6px;color:#ffffff;transform:scaleX(0.9898);transform-origin:0 0">index.blade.php</div><svg class="s" style="left:1768px;top:55px;" width="16" height="16" viewBox="0 0 16 16"><path d="M1.8 1.8 L12.6 12.8 M12.6 1.8 L1.8 12.8" stroke="#d8d8d8" stroke-width="1.45"/></svg><svg class="s" style="left:1802px;top:53px;" width="18" height="20" viewBox="0 0 18 20"><path d="M2.8 3 L15 10 L2.8 17 Z" fill="none" stroke="#cccccc" stroke-width="1.3" stroke-linejoin="round"/></svg><svg class="s" style="left:1824px;top:56px;" width="12" height="12" viewBox="0 0 12 12"><path d="M1.6 4 L5.6 8 L9.6 4" fill="none" stroke="#cccccc" stroke-width="1.15"/></svg><svg class="s" style="left:1848.2px;top:51.6px;" width="20" height="20" viewBox="0 0 20 20"><rect x="2.6" y="3.2" width="14.8" height="14.6" rx="1.4" fill="none" stroke="#cccccc" stroke-width="1.3"/><path d="M10 3.2 V17.8" stroke="#cccccc" stroke-width="1.3"/></svg><svg class="s" style="left:1878.4px;top:55.6px;" width="20" height="14" viewBox="0 0 20 14"><circle cx="3.6" cy="7" r="1.35" fill="#cccccc"/><circle cx="10" cy="7" r="1.35" fill="#cccccc"/><circle cx="16.4" cy="7" r="1.35" fill="#cccccc"/></svg><div class="t" style="left:391.80px;top:89.69px;font-size:15.6px;line-height:15.6px;color:#a9a9a9;transform:scaleX(0.9566);transform-origin:0 0">resources</div><svg class="s" style="left:463.5px;top:92px;" width="8" height="12" viewBox="0 0 8 12"><path d="M1.5 1 L5.8 5.5 L1.5 10" fill="none" stroke="#a9a9a9" stroke-width="1.2"/></svg><div class="t" style="left:476.00px;top:89.69px;font-size:15.6px;line-height:15.6px;color:#a9a9a9;transform:scaleX(0.9615);transform-origin:0 0">views</div><svg class="s" style="left:520px;top:92px;" width="8" height="12" viewBox="0 0 8 12"><path d="M1.5 1 L5.8 5.5 L1.5 10" fill="none" stroke="#a9a9a9" stroke-width="1.2"/></svg><div class="t" style="left:532.40px;top:89.69px;font-size:15.6px;line-height:15.6px;color:#a9a9a9;transform:scaleX(1.0178);transform-origin:0 0">students</div><svg class="s" style="left:597.5px;top:92px;" width="8" height="12" viewBox="0 0 8 12"><path d="M1.5 1 L5.8 5.5 L1.5 10" fill="none" stroke="#a9a9a9" stroke-width="1.2"/></svg><svg class="s" style="left:614.5px;top:89.2px;" width="16" height="12" viewBox="0 0 16 12"><path d="M4 0 C1.8 0 0.4 1.6 0.4 3.8 C0.4 5 0.9 6 1.4 6.6 L1.6 9.6 L2.4 10.6 L4.3 10.6 L4.3 8.6 L5.5 8.6 L5.5 11.2 L7.6 11.2 L7.6 8.8 L10 8.8 L10 11.2 L13 11.2 L13.2 8.2 C14.6 7.6 15.3 6.4 15.3 5.2 L15.8 4.8 L15.2 4.2 C14.8 2.2 13.4 1 10.5 1 L8 1 C7 0.3 5.6 0 4 0 Z" fill="#a77bd0"/><path d="M7.3 0.8 C7.7 2.6 7.3 4.6 5.4 6" fill="none" stroke="#7650a4" stroke-width="0.9"/><path d="M2.4 7.6 L2.5 10.4" fill="none" stroke="#6e4c98" stroke-width="0.6"/></svg><div class="t" style="left:637.80px;top:89.69px;font-size:15.6px;line-height:15.6px;color:#a9a9a9;transform:scaleX(0.9989);transform-origin:0 0">index.blade.php</div><div style="position:absolute;left:0;top:0;width:1916px;height:1040px;clip-path:inset(110px 143px 188px 373px)"><div class="r" style="left:454px;top:156.3px;width:1px;height:706.8px;background:#404040;"></div><div class="r" style="left:491px;top:179.1px;width:1px;height:45.6px;background:#404040;"></div><div class="r" style="left:491px;top:270.3px;width:1px;height:592.8px;background:#404040;"></div><div class="r" style="left:528px;top:293.1px;width:1px;height:570.0px;background:#404040;"></div><div class="r" style="left:565px;top:315.9px;width:1px;height:182.4px;background:#404040;"></div><div class="r" style="left:565px;top:543.9px;width:1px;height:319.2px;background:#404040;"></div><div class="r" style="left:602px;top:338.7px;width:1px;height:136.8px;background:#404040;"></div><div class="r" style="left:602px;top:566.7px;width:1px;height:296.4px;background:#707070;"></div><div class="r" style="left:639px;top:566.7px;width:1px;height:273.6px;background:#404040;"></div><div class="r" style="left:676px;top:566.7px;width:1px;height:273.6px;background:#404040;"></div><div class="r" style="left:713px;top:566.7px;width:1px;height:273.6px;background:#404040;"></div><div class="r" style="left:750px;top:589.5px;width:1px;height:250.8px;background:#404040;"></div><div class="r" style="left:787px;top:680.7px;width:1px;height:68.4px;background:#404040;"></div><div class="r" style="left:787px;top:817.5px;width:1px;height:22.8px;background:#404040;"></div><div class="r" style="left:824px;top:703.5px;width:1px;height:22.8px;background:#404040;"></div><div class="t" style="left:414.56px;top:110.70px;font-family:'Liberation Mono',monospace;font-size:15.4px;line-height:22.8px;color:#6e7681">1</div><div class="t" style="left:454.00px;top:110.70px;font-family:'Liberation Mono',monospace;font-size:15.4px;line-height:22.8px"><span style="color:#569cd6">@extends(</span><span style="color:#969696;background:#262626">view: </span><span style="color:#ce9178">'layouts.app'</span><span style="color:#569cd6">)</span></div><div class="t" style="left:414.56px;top:133.50px;font-family:'Liberation Mono',monospace;font-size:15.4px;line-height:22.8px;color:#6e7681">2</div><div class="t" style="left:454.00px;top:133.50px;font-family:'Liberation Mono',monospace;font-size:15.4px;line-height:22.8px"><span style="color:#569cd6">@section(</span><span style="color:#969696;background:#262626">section: </span><span style="color:#ce9178">'content'</span><span style="color:#569cd6">)</span></div><div class="t" style="left:414.56px;top:156.30px;font-family:'Liberation Mono',monospace;font-size:15.4px;line-height:22.8px;color:#6e7681">3</div><div class="t" style="left:490.96px;top:156.30px;font-family:'Liberation Mono',monospace;font-size:15.4px;line-height:22.8px"><span style="color:#808080">&lt;</span><span style="color:#569cd6">div</span><span style="color:#d4d4d4"> </span><span style="color:#9cdcfe">class</span><span style="color:#d4d4d4">=</span><span style="color:#ce9178">"d-flex justify-content-between align-items-center mb-4"</span><span style="color:#808080">&gt;</span></div><div class="t" style="left:414.56px;top:179.10px;font-family:'Liberation Mono',monospace;font-size:15.4px;line-height:22.8px;color:#6e7681">4</div><div class="t" style="left:527.92px;top:179.10px;font-family:'Liberation Mono',monospace;font-size:15.4px;line-height:22.8px"><span style="color:#808080">&lt;</span><span style="color:#569cd6">h2</span><span style="color:#808080">&gt;</span><span style="color:#d4d4d4">Daftar Mahasiswa</span><span style="color:#808080">&lt;/</span><span style="color:#569cd6">h2</span><span style="color:#808080">&gt;</span></div><div class="t" style="left:414.56px;top:201.90px;font-family:'Liberation Mono',monospace;font-size:15.4px;line-height:22.8px;color:#6e7681">5</div><div class="t" style="left:527.92px;top:201.90px;font-family:'Liberation Mono',monospace;font-size:15.4px;line-height:22.8px"><span style="color:#808080">&lt;</span><span style="color:#569cd6">a</span><span style="color:#d4d4d4"> </span><span style="color:#9cdcfe">href</span><span style="color:#d4d4d4">=</span><span style="color:#ce9178">"</span><span style="color:#808080">{{</span><span style="color:#d4d4d4"> </span><span style="color:#dcdcaa">route</span><span style="color:#d4d4d4">(</span><span style="color:#969696;background:#262626">name: </span><span style="color:#ce9178">'students.create'</span><span style="color:#d4d4d4">)</span><span style="color:#d4d4d4"> </span><span style="color:#808080">}}</span><span style="color:#ce9178">"</span><span style="color:#d4d4d4"> </span><span style="color:#9cdcfe">class</span><span style="color:#d4d4d4">=</span><span style="color:#ce9178">"btn btn-primary"</span><span style="color:#808080">&gt;</span><span style="color:#d4d4d4">Tambah Mahasiswa</span><span style="color:#808080">&lt;/</span><span style="color:#569cd6">a</span><span style="color:#808080">&gt;</span></div><div class="t" style="left:414.56px;top:224.70px;font-family:'Liberation Mono',monospace;font-size:15.4px;line-height:22.8px;color:#6e7681">6</div><div class="t" style="left:490.96px;top:224.70px;font-family:'Liberation Mono',monospace;font-size:15.4px;line-height:22.8px"><span style="color:#808080">&lt;/</span><span style="color:#569cd6">div</span><span style="color:#808080">&gt;</span></div><div class="t" style="left:414.56px;top:247.50px;font-family:'Liberation Mono',monospace;font-size:15.4px;line-height:22.8px;color:#6e7681">7</div><div class="t" style="left:490.96px;top:247.50px;font-family:'Liberation Mono',monospace;font-size:15.4px;line-height:22.8px"><span style="color:#808080">&lt;</span><span style="color:#569cd6">div</span><span style="color:#d4d4d4"> </span><span style="color:#9cdcfe">class</span><span style="color:#d4d4d4">=</span><span style="color:#ce9178">"table-responsive"</span><span style="color:#808080">&gt;</span></div><div class="t" style="left:414.56px;top:270.30px;font-family:'Liberation Mono',monospace;font-size:15.4px;line-height:22.8px;color:#6e7681">8</div><div class="t" style="left:527.92px;top:270.30px;font-family:'Liberation Mono',monospace;font-size:15.4px;line-height:22.8px"><span style="color:#808080">&lt;</span><span style="color:#569cd6">table</span><span style="color:#d4d4d4"> </span><span style="color:#9cdcfe">class</span><span style="color:#d4d4d4">=</span><span style="color:#ce9178">"table table-striped"</span><span style="color:#808080">&gt;</span></div><div class="t" style="left:414.56px;top:293.10px;font-family:'Liberation Mono',monospace;font-size:15.4px;line-height:22.8px;color:#6e7681">9</div><div class="t" style="left:564.88px;top:293.10px;font-family:'Liberation Mono',monospace;font-size:15.4px;line-height:22.8px"><span style="color:#808080">&lt;</span><span style="color:#569cd6">thead</span><span style="color:#808080">&gt;</span></div><div class="t" style="left:405.32px;top:315.90px;font-family:'Liberation Mono',monospace;font-size:15.4px;line-height:22.8px;color:#6e7681">10</div><div class="t" style="left:601.84px;top:315.90px;font-family:'Liberation Mono',monospace;font-size:15.4px;line-height:22.8px"><span style="color:#808080">&lt;</span><span style="color:#569cd6">tr</span><span style="color:#808080">&gt;</span></div><div class="t" style="left:405.32px;top:338.70px;font-family:'Liberation Mono',monospace;font-size:15.4px;line-height:22.8px;color:#6e7681">11</div><div class="t" style="left:638.80px;top:338.70px;font-family:'Liberation Mono',monospace;font-size:15.4px;line-height:22.8px"><span style="color:#808080">&lt;</span><span style="color:#569cd6">th</span><span style="color:#808080">&gt;</span><span style="color:#d4d4d4">NIM</span><span style="color:#808080">&lt;/</span><span style="color:#569cd6">th</span><span style="color:#808080">&gt;</span></div><div class="t" style="left:405.32px;top:361.50px;font-family:'Liberation Mono',monospace;font-size:15.4px;line-height:22.8px;color:#6e7681">12</div><div class="t" style="left:638.80px;top:361.50px;font-family:'Liberation Mono',monospace;font-size:15.4px;line-height:22.8px"><span style="color:#808080">&lt;</span><span style="color:#569cd6">th</span><span style="color:#808080">&gt;</span><span style="color:#d4d4d4">Nama</span><span style="color:#808080">&lt;/</span><span style="color:#569cd6">th</span><span style="color:#808080">&gt;</span></div><div class="t" style="left:405.32px;top:384.30px;font-family:'Liberation Mono',monospace;font-size:15.4px;line-height:22.8px;color:#6e7681">13</div><div class="t" style="left:638.80px;top:384.30px;font-family:'Liberation Mono',monospace;font-size:15.4px;line-height:22.8px"><span style="color:#808080">&lt;</span><span style="color:#569cd6">th</span><span style="color:#808080">&gt;</span><span style="color:#d4d4d4">Jurusan</span><span style="color:#808080">&lt;/</span><span style="color:#569cd6">th</span><span style="color:#808080">&gt;</span></div><div class="t" style="left:405.32px;top:407.10px;font-family:'Liberation Mono',monospace;font-size:15.4px;line-height:22.8px;color:#6e7681">14</div><div class="t" style="left:638.80px;top:407.10px;font-family:'Liberation Mono',monospace;font-size:15.4px;line-height:22.8px"><span style="color:#808080">&lt;</span><span style="color:#569cd6">th</span><span style="color:#808080">&gt;</span><span style="color:#d4d4d4">Mata Kuliah</span><span style="color:#808080">&lt;/</span><span style="color:#569cd6">th</span><span style="color:#808080">&gt;</span></div><div class="t" style="left:405.32px;top:429.90px;font-family:'Liberation Mono',monospace;font-size:15.4px;line-height:22.8px;color:#6e7681">15</div><div class="t" style="left:638.80px;top:429.90px;font-family:'Liberation Mono',monospace;font-size:15.4px;line-height:22.8px"><span style="color:#808080">&lt;</span><span style="color:#569cd6">th</span><span style="color:#808080">&gt;</span><span style="color:#d4d4d4">Total SKS</span><span style="color:#808080">&lt;/</span><span style="color:#569cd6">th</span><span style="color:#808080">&gt;</span></div><div class="t" style="left:405.32px;top:452.70px;font-family:'Liberation Mono',monospace;font-size:15.4px;line-height:22.8px;color:#6e7681">16</div><div class="t" style="left:638.80px;top:452.70px;font-family:'Liberation Mono',monospace;font-size:15.4px;line-height:22.8px"><span style="color:#808080">&lt;</span><span style="color:#569cd6">th</span><span style="color:#808080">&gt;</span><span style="color:#d4d4d4">Aksi</span><span style="color:#808080">&lt;/</span><span style="color:#569cd6">th</span><span style="color:#808080">&gt;</span></div><div class="t" style="left:405.32px;top:475.50px;font-family:'Liberation Mono',monospace;font-size:15.4px;line-height:22.8px;color:#6e7681">17</div><div class="t" style="left:601.84px;top:475.50px;font-family:'Liberation Mono',monospace;font-size:15.4px;line-height:22.8px"><span style="color:#808080">&lt;/</span><span style="color:#569cd6">tr</span><span style="color:#808080">&gt;</span></div><div class="t" style="left:405.32px;top:498.30px;font-family:'Liberation Mono',monospace;font-size:15.4px;line-height:22.8px;color:#6e7681">18</div><div class="t" style="left:564.88px;top:498.30px;font-family:'Liberation Mono',monospace;font-size:15.4px;line-height:22.8px"><span style="color:#808080">&lt;/</span><span style="color:#569cd6">thead</span><span style="color:#808080">&gt;</span></div><div class="t" style="left:405.32px;top:521.10px;font-family:'Liberation Mono',monospace;font-size:15.4px;line-height:22.8px;color:#6e7681">19</div><div class="t" style="left:564.88px;top:521.10px;font-family:'Liberation Mono',monospace;font-size:15.4px;line-height:22.8px"><span style="color:#808080">&lt;</span><span style="color:#569cd6">tbody</span><span style="color:#808080">&gt;</span></div><div class="t" style="left:405.32px;top:543.90px;font-family:'Liberation Mono',monospace;font-size:15.4px;line-height:22.8px;color:#6e7681">20</div><div class="t" style="left:601.84px;top:543.90px;font-family:'Liberation Mono',monospace;font-size:15.4px;line-height:22.8px"><span style="color:#569cd6">@foreach(</span><span style="color:#9cdcfe">$students</span><span style="color:#d4d4d4"> as </span><span style="color:#9cdcfe">$student</span><span style="color:#569cd6">)</span></div><div class="t" style="left:405.32px;top:566.70px;font-family:'Liberation Mono',monospace;font-size:15.4px;line-height:22.8px;color:#6e7681">21</div><div class="t" style="left:749.68px;top:566.70px;font-family:'Liberation Mono',monospace;font-size:15.4px;line-height:22.8px"><span style="color:#808080">&lt;</span><span style="color:#569cd6">tr</span><span style="color:#808080">&gt;</span></div><div class="t" style="left:405.32px;top:589.50px;font-family:'Liberation Mono',monospace;font-size:15.4px;line-height:22.8px;color:#6e7681">22</div><div class="t" style="left:786.64px;top:589.50px;font-family:'Liberation Mono',monospace;font-size:15.4px;line-height:22.8px"><span style="color:#808080">&lt;</span><span style="color:#569cd6">td</span><span style="color:#808080">&gt;</span><span style="color:#808080">{{</span><span style="color:#d4d4d4"> </span><span style="color:#9cdcfe">$student</span><span style="color:#d4d4d4">-&gt;</span><span style="color:#9cdcfe">nim</span><span style="color:#d4d4d4"> </span><span style="color:#808080">}}</span><span style="color:#808080">&lt;/</span><span style="color:#569cd6">td</span><span style="color:#808080">&gt;</span></div><div class="t" style="left:405.32px;top:612.30px;font-family:'Liberation Mono',monospace;font-size:15.4px;line-height:22.8px;color:#6e7681">23</div><div class="t" style="left:786.64px;top:612.30px;font-family:'Liberation Mono',monospace;font-size:15.4px;line-height:22.8px"><span style="color:#808080">&lt;</span><span style="color:#569cd6">td</span><span style="color:#808080">&gt;</span><span style="color:#808080">{{</span><span style="color:#d4d4d4"> </span><span style="color:#9cdcfe">$student</span><span style="color:#d4d4d4">-&gt;</span><span style="color:#9cdcfe">name</span><span style="color:#d4d4d4"> </span><span style="color:#808080">}}</span><span style="color:#808080">&lt;/</span><span style="color:#569cd6">td</span><span style="color:#808080">&gt;</span></div><div class="t" style="left:405.32px;top:635.10px;font-family:'Liberation Mono',monospace;font-size:15.4px;line-height:22.8px;color:#6e7681">24</div><div class="t" style="left:786.64px;top:635.10px;font-family:'Liberation Mono',monospace;font-size:15.4px;line-height:22.8px"><span style="color:#808080">&lt;</span><span style="color:#569cd6">td</span><span style="color:#808080">&gt;</span><span style="color:#808080">{{</span><span style="color:#d4d4d4"> </span><span style="color:#9cdcfe">$student</span><span style="color:#d4d4d4">-&gt;</span><span style="color:#9cdcfe">major</span><span style="color:#d4d4d4">-&gt;</span><span style="color:#9cdcfe">name</span><span style="color:#d4d4d4"> </span><span style="color:#808080">}}</span><span style="color:#808080">&lt;/</span><span style="color:#569cd6">td</span><span style="color:#808080">&gt;</span></div><div class="t" style="left:405.32px;top:657.90px;font-family:'Liberation Mono',monospace;font-size:15.4px;line-height:22.8px;color:#6e7681">25</div><div class="t" style="left:786.64px;top:657.90px;font-family:'Liberation Mono',monospace;font-size:15.4px;line-height:22.8px"><span style="color:#808080">&lt;</span><span style="color:#569cd6">td</span><span style="color:#808080">&gt;</span></div><div class="t" style="left:405.32px;top:680.70px;font-family:'Liberation Mono',monospace;font-size:15.4px;line-height:22.8px;color:#6e7681">26</div><div class="t" style="left:823.60px;top:680.70px;font-family:'Liberation Mono',monospace;font-size:15.4px;line-height:22.8px"><span style="color:#569cd6">@foreach(</span><span style="color:#9cdcfe">$student</span><span style="color:#d4d4d4">-&gt;</span><span style="color:#9cdcfe">subjects</span><span style="color:#d4d4d4"> as </span><span style="color:#9cdcfe">$subject</span><span style="color:#569cd6">)</span></div><div class="t" style="left:405.32px;top:703.50px;font-family:'Liberation Mono',monospace;font-size:15.4px;line-height:22.8px;color:#6e7681">27</div><div class="t" style="left:860.56px;top:703.50px;font-family:'Liberation Mono',monospace;font-size:15.4px;line-height:22.8px"><span style="color:#808080">&lt;</span><span style="color:#569cd6">span</span><span style="color:#d4d4d4"> </span><span style="color:#9cdcfe">class</span><span style="color:#d4d4d4">=</span><span style="color:#ce9178">"badge bg-secondary me-1"</span><span style="color:#808080">&gt;</span><span style="color:#808080">{{</span><span style="color:#d4d4d4"> </span><span style="color:#9cdcfe">$subject</span><span style="color:#d4d4d4">-&gt;</span><span style="color:#9cdcfe">name</span><span style="color:#d4d4d4"> </span><span style="color:#808080">}}</span><span style="color:#808080">&lt;/</span><span style="color:#569cd6">span</span><span style="color:#808080">&gt;</span></div><div class="t" style="left:405.32px;top:726.30px;font-family:'Liberation Mono',monospace;font-size:15.4px;line-height:22.8px;color:#6e7681">28</div><div class="t" style="left:823.60px;top:726.30px;font-family:'Liberation Mono',monospace;font-size:15.4px;line-height:22.8px"><span style="color:#569cd6">@endforeach</span></div><div class="t" style="left:405.32px;top:749.10px;font-family:'Liberation Mono',monospace;font-size:15.4px;line-height:22.8px;color:#6e7681">29</div><div class="t" style="left:786.64px;top:749.10px;font-family:'Liberation Mono',monospace;font-size:15.4px;line-height:22.8px"><span style="color:#808080">&lt;/</span><span style="color:#569cd6">td</span><span style="color:#808080">&gt;</span></div><div class="t" style="left:405.32px;top:771.90px;font-family:'Liberation Mono',monospace;font-size:15.4px;line-height:22.8px;color:#6e7681">30</div><div class="t" style="left:786.64px;top:771.90px;font-family:'Liberation Mono',monospace;font-size:15.4px;line-height:22.8px"><span style="color:#808080">&lt;</span><span style="color:#569cd6">td</span><span style="color:#808080">&gt;</span><span style="color:#808080">{{</span><span style="color:#d4d4d4"> </span><span style="color:#9cdcfe">$student</span><span style="color:#d4d4d4">-&gt;</span><span style="color:#9cdcfe">subjects</span><span style="color:#d4d4d4">-&gt;</span><span style="color:#dcdcaa">sum</span><span style="color:#d4d4d4">(</span><span style="color:#ce9178">'sks'</span><span style="color:#d4d4d4">)</span><span style="color:#d4d4d4"> </span><span style="color:#808080">}}</span><span style="color:#808080">&lt;/</span><span style="color:#569cd6">td</span><span style="color:#808080">&gt;</span></div><div class="t" style="left:405.32px;top:794.70px;font-family:'Liberation Mono',monospace;font-size:15.4px;line-height:22.8px;color:#6e7681">31</div><div class="t" style="left:786.64px;top:794.70px;font-family:'Liberation Mono',monospace;font-size:15.4px;line-height:22.8px"><span style="color:#808080">&lt;</span><span style="color:#569cd6">td</span><span style="color:#808080">&gt;</span></div><div class="t" style="left:405.32px;top:817.50px;font-family:'Liberation Mono',monospace;font-size:15.4px;line-height:22.8px;color:#6e7681">32</div><div class="t" style="left:823.60px;top:817.50px;font-family:'Liberation Mono',monospace;font-size:15.4px;line-height:22.8px"><span style="color:#808080">&lt;</span><span style="color:#569cd6">a</span><span style="color:#d4d4d4"> </span><span style="color:#9cdcfe">href</span><span style="color:#d4d4d4">=</span><span style="color:#ce9178">"</span><span style="color:#808080">{{</span><span style="color:#d4d4d4"> </span><span style="color:#dcdcaa">route</span><span style="color:#d4d4d4">(</span><span style="color:#969696;background:#262626">name: </span><span style="color:#ce9178">'students.show'</span><span style="color:#d4d4d4">, </span><span style="color:#969696;background:#262626">parameters: </span><span style="color:#9cdcfe">$student</span><span style="color:#d4d4d4">-&gt;</span><span style="color:#9cdcfe">id</span><span style="color:#d4d4d4">)</span><span style="color:#d4d4d4"> </span><span style="color:#808080">}}</span><span style="color:#ce9178">"</span><span style="color:#d4d4d4"> </span><span style="color:#9cdcfe">class</span><span style="color:#d4d4d4">=</span><span style="color:#ce9178">"btn btn-info</span></div><div class="t" style="left:405.32px;top:840.30px;font-family:'Liberation Mono',monospace;font-size:15.4px;line-height:22.8px;color:#6e7681">33</div><div class="t" style="left:638.80px;top:840.30px;font-family:'Liberation Mono',monospace;font-size:15.4px;line-height:22.8px"><span style="color:#ce9178">btn-sm"</span><span style="color:#808080">&gt;</span><span style="color:#d4d4d4">Detail</span><span style="color:#808080">&lt;/</span><span style="color:#569cd6">a</span><span style="color:#808080">&gt;</span></div></div><div class="r" style="left:1773px;top:110px;width:7px;height:742px;background:linear-gradient(90deg,rgba(0,0,0,0),rgba(0,0,0,0.28))"></div><svg class="s" style="left:1773px;top:110px;" width="127" height="110" viewBox="0 0 127 110"><g opacity="0.5"><rect x="15.0" y="0.60" width="9.0" height="1.15" fill="#569cd6"/><rect x="24.0" y="0.60" width="13.0" height="1.15" fill="#ce9178"/><rect x="37.0" y="0.60" width="1.0" height="1.15" fill="#569cd6"/><rect x="15.0" y="2.60" width="9.0" height="1.15" fill="#569cd6"/><rect x="24.0" y="2.60" width="9.0" height="1.15" fill="#ce9178"/><rect x="33.0" y="2.60" width="1.0" height="1.15" fill="#569cd6"/><rect x="19.0" y="4.60" width="1.0" height="1.15" fill="#808080"/><rect x="20.0" y="4.60" width="3.0" height="1.15" fill="#569cd6"/><rect x="24.0" y="4.60" width="5.0" height="1.15" fill="#9cdcfe"/><rect x="29.0" y="4.60" width="1.0" height="1.15" fill="#d4d4d4"/><rect x="30.0" y="4.60" width="7.0" height="1.15" fill="#ce9178"/><rect x="38.0" y="4.60" width="23.0" height="1.15" fill="#ce9178"/><rect x="62.0" y="4.60" width="18.0" height="1.15" fill="#ce9178"/><rect x="81.0" y="4.60" width="5.0" height="1.15" fill="#ce9178"/><rect x="86.0" y="4.60" width="1.0" height="1.15" fill="#808080"/><rect x="23.0" y="6.60" width="1.0" height="1.15" fill="#808080"/><rect x="24.0" y="6.60" width="2.0" height="1.15" fill="#569cd6"/><rect x="26.0" y="6.60" width="1.0" height="1.15" fill="#808080"/><rect x="27.0" y="6.60" width="6.0" height="1.15" fill="#d4d4d4"/><rect x="34.0" y="6.60" width="9.0" height="1.15" fill="#d4d4d4"/><rect x="43.0" y="6.60" width="2.0" height="1.15" fill="#808080"/><rect x="45.0" y="6.60" width="2.0" height="1.15" fill="#569cd6"/><rect x="47.0" y="6.60" width="1.0" height="1.15" fill="#808080"/><rect x="23.0" y="8.60" width="1.0" height="1.15" fill="#808080"/><rect x="24.0" y="8.60" width="1.0" height="1.15" fill="#569cd6"/><rect x="26.0" y="8.60" width="4.0" height="1.15" fill="#9cdcfe"/><rect x="30.0" y="8.60" width="1.0" height="1.15" fill="#d4d4d4"/><rect x="31.0" y="8.60" width="1.0" height="1.15" fill="#ce9178"/><rect x="32.0" y="8.60" width="2.0" height="1.15" fill="#808080"/><rect x="35.0" y="8.60" width="5.0" height="1.15" fill="#dcdcaa"/><rect x="40.0" y="8.60" width="1.0" height="1.15" fill="#d4d4d4"/><rect x="41.0" y="8.60" width="17.0" height="1.15" fill="#ce9178"/><rect x="58.0" y="8.60" width="1.0" height="1.15" fill="#d4d4d4"/><rect x="60.0" y="8.60" width="2.0" height="1.15" fill="#808080"/><rect x="62.0" y="8.60" width="1.0" height="1.15" fill="#ce9178"/><rect x="64.0" y="8.60" width="5.0" height="1.15" fill="#9cdcfe"/><rect x="69.0" y="8.60" width="1.0" height="1.15" fill="#d4d4d4"/><rect x="70.0" y="8.60" width="4.0" height="1.15" fill="#ce9178"/><rect x="75.0" y="8.60" width="12.0" height="1.15" fill="#ce9178"/><rect x="87.0" y="8.60" width="1.0" height="1.15" fill="#808080"/><rect x="88.0" y="8.60" width="6.0" height="1.15" fill="#d4d4d4"/><rect x="95.0" y="8.60" width="9.0" height="1.15" fill="#d4d4d4"/><rect x="104.0" y="8.60" width="2.0" height="1.15" fill="#808080"/><rect x="106.0" y="8.60" width="1.0" height="1.15" fill="#569cd6"/><rect x="107.0" y="8.60" width="1.0" height="1.15" fill="#808080"/><rect x="19.0" y="10.60" width="2.0" height="1.15" fill="#808080"/><rect x="21.0" y="10.60" width="3.0" height="1.15" fill="#569cd6"/><rect x="24.0" y="10.60" width="1.0" height="1.15" fill="#808080"/><rect x="19.0" y="12.60" width="1.0" height="1.15" fill="#808080"/><rect x="20.0" y="12.60" width="3.0" height="1.15" fill="#569cd6"/><rect x="24.0" y="12.60" width="5.0" height="1.15" fill="#9cdcfe"/><rect x="29.0" y="12.60" width="1.0" height="1.15" fill="#d4d4d4"/><rect x="30.0" y="12.60" width="18.0" height="1.15" fill="#ce9178"/><rect x="48.0" y="12.60" width="1.0" height="1.15" fill="#808080"/><rect x="23.0" y="14.60" width="1.0" height="1.15" fill="#808080"/><rect x="24.0" y="14.60" width="5.0" height="1.15" fill="#569cd6"/><rect x="30.0" y="14.60" width="5.0" height="1.15" fill="#9cdcfe"/><rect x="35.0" y="14.60" width="1.0" height="1.15" fill="#d4d4d4"/><rect x="36.0" y="14.60" width="6.0" height="1.15" fill="#ce9178"/><rect x="43.0" y="14.60" width="14.0" height="1.15" fill="#ce9178"/><rect x="57.0" y="14.60" width="1.0" height="1.15" fill="#808080"/><rect x="27.0" y="16.60" width="1.0" height="1.15" fill="#808080"/><rect x="28.0" y="16.60" width="5.0" height="1.15" fill="#569cd6"/><rect x="33.0" y="16.60" width="1.0" height="1.15" fill="#808080"/><rect x="31.0" y="18.60" width="1.0" height="1.15" fill="#808080"/><rect x="32.0" y="18.60" width="2.0" height="1.15" fill="#569cd6"/><rect x="34.0" y="18.60" width="1.0" height="1.15" fill="#808080"/><rect x="35.0" y="20.60" width="1.0" height="1.15" fill="#808080"/><rect x="36.0" y="20.60" width="2.0" height="1.15" fill="#569cd6"/><rect x="38.0" y="20.60" width="1.0" height="1.15" fill="#808080"/><rect x="39.0" y="20.60" width="3.0" height="1.15" fill="#d4d4d4"/><rect x="42.0" y="20.60" width="2.0" height="1.15" fill="#808080"/><rect x="44.0" y="20.60" width="2.0" height="1.15" fill="#569cd6"/><rect x="46.0" y="20.60" width="1.0" height="1.15" fill="#808080"/><rect x="35.0" y="22.60" width="1.0" height="1.15" fill="#808080"/><rect x="36.0" y="22.60" width="2.0" height="1.15" fill="#569cd6"/><rect x="38.0" y="22.60" width="1.0" height="1.15" fill="#808080"/><rect x="39.0" y="22.60" width="4.0" height="1.15" fill="#d4d4d4"/><rect x="43.0" y="22.60" width="2.0" height="1.15" fill="#808080"/><rect x="45.0" y="22.60" width="2.0" height="1.15" fill="#569cd6"/><rect x="47.0" y="22.60" width="1.0" height="1.15" fill="#808080"/><rect x="35.0" y="24.60" width="1.0" height="1.15" fill="#808080"/><rect x="36.0" y="24.60" width="2.0" height="1.15" fill="#569cd6"/><rect x="38.0" y="24.60" width="1.0" height="1.15" fill="#808080"/><rect x="39.0" y="24.60" width="7.0" height="1.15" fill="#d4d4d4"/><rect x="46.0" y="24.60" width="2.0" height="1.15" fill="#808080"/><rect x="48.0" y="24.60" width="2.0" height="1.15" fill="#569cd6"/><rect x="50.0" y="24.60" width="1.0" height="1.15" fill="#808080"/><rect x="35.0" y="26.60" width="1.0" height="1.15" fill="#808080"/><rect x="36.0" y="26.60" width="2.0" height="1.15" fill="#569cd6"/><rect x="38.0" y="26.60" width="1.0" height="1.15" fill="#808080"/><rect x="39.0" y="26.60" width="4.0" height="1.15" fill="#d4d4d4"/><rect x="44.0" y="26.60" width="6.0" height="1.15" fill="#d4d4d4"/><rect x="50.0" y="26.60" width="2.0" height="1.15" fill="#808080"/><rect x="52.0" y="26.60" width="2.0" height="1.15" fill="#569cd6"/><rect x="54.0" y="26.60" width="1.0" height="1.15" fill="#808080"/><rect x="35.0" y="28.60" width="1.0" height="1.15" fill="#808080"/><rect x="36.0" y="28.60" width="2.0" height="1.15" fill="#569cd6"/><rect x="38.0" y="28.60" width="1.0" height="1.15" fill="#808080"/><rect x="39.0" y="28.60" width="5.0" height="1.15" fill="#d4d4d4"/><rect x="45.0" y="28.60" width="3.0" height="1.15" fill="#d4d4d4"/><rect x="48.0" y="28.60" width="2.0" height="1.15" fill="#808080"/><rect x="50.0" y="28.60" width="2.0" height="1.15" fill="#569cd6"/><rect x="52.0" y="28.60" width="1.0" height="1.15" fill="#808080"/><rect x="35.0" y="30.60" width="1.0" height="1.15" fill="#808080"/><rect x="36.0" y="30.60" width="2.0" height="1.15" fill="#569cd6"/><rect x="38.0" y="30.60" width="1.0" height="1.15" fill="#808080"/><rect x="39.0" y="30.60" width="4.0" height="1.15" fill="#d4d4d4"/><rect x="43.0" y="30.60" width="2.0" height="1.15" fill="#808080"/><rect x="45.0" y="30.60" width="2.0" height="1.15" fill="#569cd6"/><rect x="47.0" y="30.60" width="1.0" height="1.15" fill="#808080"/><rect x="31.0" y="32.60" width="2.0" height="1.15" fill="#808080"/><rect x="33.0" y="32.60" width="2.0" height="1.15" fill="#569cd6"/><rect x="35.0" y="32.60" width="1.0" height="1.15" fill="#808080"/><rect x="27.0" y="34.60" width="2.0" height="1.15" fill="#808080"/><rect x="29.0" y="34.60" width="5.0" height="1.15" fill="#569cd6"/><rect x="34.0" y="34.60" width="1.0" height="1.15" fill="#808080"/><rect x="27.0" y="36.60" width="1.0" height="1.15" fill="#808080"/><rect x="28.0" y="36.60" width="5.0" height="1.15" fill="#569cd6"/><rect x="33.0" y="36.60" width="1.0" height="1.15" fill="#808080"/><rect x="31.0" y="38.60" width="9.0" height="1.15" fill="#569cd6"/><rect x="40.0" y="38.60" width="9.0" height="1.15" fill="#9cdcfe"/><rect x="50.0" y="38.60" width="2.0" height="1.15" fill="#d4d4d4"/><rect x="53.0" y="38.60" width="8.0" height="1.15" fill="#9cdcfe"/><rect x="61.0" y="38.60" width="1.0" height="1.15" fill="#569cd6"/><rect x="47.0" y="40.60" width="1.0" height="1.15" fill="#808080"/><rect x="48.0" y="40.60" width="2.0" height="1.15" fill="#569cd6"/><rect x="50.0" y="40.60" width="1.0" height="1.15" fill="#808080"/><rect x="51.0" y="42.60" width="1.0" height="1.15" fill="#808080"/><rect x="52.0" y="42.60" width="2.0" height="1.15" fill="#569cd6"/><rect x="54.0" y="42.60" width="1.0" height="1.15" fill="#808080"/><rect x="55.0" y="42.60" width="2.0" height="1.15" fill="#808080"/><rect x="58.0" y="42.60" width="8.0" height="1.15" fill="#9cdcfe"/><rect x="66.0" y="42.60" width="2.0" height="1.15" fill="#d4d4d4"/><rect x="68.0" y="42.60" width="3.0" height="1.15" fill="#9cdcfe"/><rect x="72.0" y="42.60" width="2.0" height="1.15" fill="#808080"/><rect x="74.0" y="42.60" width="2.0" height="1.15" fill="#808080"/><rect x="76.0" y="42.60" width="2.0" height="1.15" fill="#569cd6"/><rect x="78.0" y="42.60" width="1.0" height="1.15" fill="#808080"/><rect x="51.0" y="44.60" width="1.0" height="1.15" fill="#808080"/><rect x="52.0" y="44.60" width="2.0" height="1.15" fill="#569cd6"/><rect x="54.0" y="44.60" width="1.0" height="1.15" fill="#808080"/><rect x="55.0" y="44.60" width="2.0" height="1.15" fill="#808080"/><rect x="58.0" y="44.60" width="8.0" height="1.15" fill="#9cdcfe"/><rect x="66.0" y="44.60" width="2.0" height="1.15" fill="#d4d4d4"/><rect x="68.0" y="44.60" width="4.0" height="1.15" fill="#9cdcfe"/><rect x="73.0" y="44.60" width="2.0" height="1.15" fill="#808080"/><rect x="75.0" y="44.60" width="2.0" height="1.15" fill="#808080"/><rect x="77.0" y="44.60" width="2.0" height="1.15" fill="#569cd6"/><rect x="79.0" y="44.60" width="1.0" height="1.15" fill="#808080"/><rect x="51.0" y="46.60" width="1.0" height="1.15" fill="#808080"/><rect x="52.0" y="46.60" width="2.0" height="1.15" fill="#569cd6"/><rect x="54.0" y="46.60" width="1.0" height="1.15" fill="#808080"/><rect x="55.0" y="46.60" width="2.0" height="1.15" fill="#808080"/><rect x="58.0" y="46.60" width="8.0" height="1.15" fill="#9cdcfe"/><rect x="66.0" y="46.60" width="2.0" height="1.15" fill="#d4d4d4"/><rect x="68.0" y="46.60" width="5.0" height="1.15" fill="#9cdcfe"/><rect x="73.0" y="46.60" width="2.0" height="1.15" fill="#d4d4d4"/><rect x="75.0" y="46.60" width="4.0" height="1.15" fill="#9cdcfe"/><rect x="80.0" y="46.60" width="2.0" height="1.15" fill="#808080"/><rect x="82.0" y="46.60" width="2.0" height="1.15" fill="#808080"/><rect x="84.0" y="46.60" width="2.0" height="1.15" fill="#569cd6"/><rect x="86.0" y="46.60" width="1.0" height="1.15" fill="#808080"/><rect x="51.0" y="48.60" width="1.0" height="1.15" fill="#808080"/><rect x="52.0" y="48.60" width="2.0" height="1.15" fill="#569cd6"/><rect x="54.0" y="48.60" width="1.0" height="1.15" fill="#808080"/><rect x="55.0" y="50.60" width="9.0" height="1.15" fill="#569cd6"/><rect x="64.0" y="50.60" width="8.0" height="1.15" fill="#9cdcfe"/><rect x="72.0" y="50.60" width="2.0" height="1.15" fill="#d4d4d4"/><rect x="74.0" y="50.60" width="8.0" height="1.15" fill="#9cdcfe"/><rect x="83.0" y="50.60" width="2.0" height="1.15" fill="#d4d4d4"/><rect x="86.0" y="50.60" width="8.0" height="1.15" fill="#9cdcfe"/><rect x="94.0" y="50.60" width="1.0" height="1.15" fill="#569cd6"/><rect x="59.0" y="52.60" width="1.0" height="1.15" fill="#808080"/><rect x="60.0" y="52.60" width="4.0" height="1.15" fill="#569cd6"/><rect x="65.0" y="52.60" width="5.0" height="1.15" fill="#9cdcfe"/><rect x="70.0" y="52.60" width="1.0" height="1.15" fill="#d4d4d4"/><rect x="71.0" y="52.60" width="6.0" height="1.15" fill="#ce9178"/><rect x="78.0" y="52.60" width="12.0" height="1.15" fill="#ce9178"/><rect x="91.0" y="52.60" width="5.0" height="1.15" fill="#ce9178"/><rect x="96.0" y="52.60" width="1.0" height="1.15" fill="#808080"/><rect x="97.0" y="52.60" width="2.0" height="1.15" fill="#808080"/><rect x="100.0" y="52.60" width="8.0" height="1.15" fill="#9cdcfe"/><rect x="108.0" y="52.60" width="2.0" height="1.15" fill="#d4d4d4"/><rect x="110.0" y="52.60" width="4.0" height="1.15" fill="#9cdcfe"/><rect x="115.0" y="52.60" width="2.0" height="1.15" fill="#808080"/><rect x="117.0" y="52.60" width="2.0" height="1.15" fill="#808080"/><rect x="119.0" y="52.60" width="4.0" height="1.15" fill="#569cd6"/><rect x="123.0" y="52.60" width="1.0" height="1.15" fill="#808080"/><rect x="55.0" y="54.60" width="11.0" height="1.15" fill="#569cd6"/><rect x="51.0" y="56.60" width="2.0" height="1.15" fill="#808080"/><rect x="53.0" y="56.60" width="2.0" height="1.15" fill="#569cd6"/><rect x="55.0" y="56.60" width="1.0" height="1.15" fill="#808080"/><rect x="51.0" y="58.60" width="1.0" height="1.15" fill="#808080"/><rect x="52.0" y="58.60" width="2.0" height="1.15" fill="#569cd6"/><rect x="54.0" y="58.60" width="1.0" height="1.15" fill="#808080"/><rect x="55.0" y="58.60" width="2.0" height="1.15" fill="#808080"/><rect x="58.0" y="58.60" width="8.0" height="1.15" fill="#9cdcfe"/><rect x="66.0" y="58.60" width="2.0" height="1.15" fill="#d4d4d4"/><rect x="68.0" y="58.60" width="8.0" height="1.15" fill="#9cdcfe"/><rect x="76.0" y="58.60" width="2.0" height="1.15" fill="#d4d4d4"/><rect x="78.0" y="58.60" width="3.0" height="1.15" fill="#dcdcaa"/><rect x="81.0" y="58.60" width="1.0" height="1.15" fill="#d4d4d4"/><rect x="82.0" y="58.60" width="5.0" height="1.15" fill="#ce9178"/><rect x="87.0" y="58.60" width="1.0" height="1.15" fill="#d4d4d4"/><rect x="89.0" y="58.60" width="2.0" height="1.15" fill="#808080"/><rect x="91.0" y="58.60" width="2.0" height="1.15" fill="#808080"/><rect x="93.0" y="58.60" width="2.0" height="1.15" fill="#569cd6"/><rect x="95.0" y="58.60" width="1.0" height="1.15" fill="#808080"/><rect x="51.0" y="60.60" width="1.0" height="1.15" fill="#808080"/><rect x="52.0" y="60.60" width="2.0" height="1.15" fill="#569cd6"/><rect x="54.0" y="60.60" width="1.0" height="1.15" fill="#808080"/><rect x="55.0" y="62.60" width="1.0" height="1.15" fill="#808080"/><rect x="56.0" y="62.60" width="1.0" height="1.15" fill="#569cd6"/><rect x="58.0" y="62.60" width="4.0" height="1.15" fill="#9cdcfe"/><rect x="62.0" y="62.60" width="1.0" height="1.15" fill="#d4d4d4"/><rect x="63.0" y="62.60" width="1.0" height="1.15" fill="#ce9178"/><rect x="64.0" y="62.60" width="2.0" height="1.15" fill="#808080"/><rect x="67.0" y="62.60" width="5.0" height="1.15" fill="#dcdcaa"/><rect x="72.0" y="62.60" width="1.0" height="1.15" fill="#d4d4d4"/><rect x="73.0" y="62.60" width="15.0" height="1.15" fill="#ce9178"/><rect x="88.0" y="62.60" width="1.0" height="1.15" fill="#d4d4d4"/><rect x="90.0" y="62.60" width="8.0" height="1.15" fill="#9cdcfe"/><rect x="98.0" y="62.60" width="2.0" height="1.15" fill="#d4d4d4"/><rect x="100.0" y="62.60" width="2.0" height="1.15" fill="#9cdcfe"/><rect x="102.0" y="62.60" width="1.0" height="1.15" fill="#d4d4d4"/><rect x="104.0" y="62.60" width="2.0" height="1.15" fill="#808080"/><rect x="106.0" y="62.60" width="1.0" height="1.15" fill="#ce9178"/><rect x="108.0" y="62.60" width="5.0" height="1.15" fill="#9cdcfe"/><rect x="113.0" y="62.60" width="1.0" height="1.15" fill="#d4d4d4"/><rect x="114.0" y="62.60" width="4.0" height="1.15" fill="#ce9178"/><rect x="119.0" y="62.60" width="6.0" height="1.15" fill="#ce9178"/><rect x="35.0" y="64.60" width="7.0" height="1.15" fill="#ce9178"/><rect x="42.0" y="64.60" width="1.0" height="1.15" fill="#808080"/><rect x="43.0" y="64.60" width="6.0" height="1.15" fill="#d4d4d4"/><rect x="49.0" y="64.60" width="2.0" height="1.15" fill="#808080"/><rect x="51.0" y="64.60" width="1.0" height="1.15" fill="#569cd6"/><rect x="52.0" y="64.60" width="1.0" height="1.15" fill="#808080"/><rect x="55.0" y="66.60" width="1.0" height="1.15" fill="#808080"/><rect x="56.0" y="66.60" width="1.0" height="1.15" fill="#569cd6"/><rect x="58.0" y="66.60" width="4.0" height="1.15" fill="#9cdcfe"/><rect x="62.0" y="66.60" width="1.0" height="1.15" fill="#d4d4d4"/><rect x="63.0" y="66.60" width="1.0" height="1.15" fill="#ce9178"/><rect x="64.0" y="66.60" width="2.0" height="1.15" fill="#808080"/><rect x="67.0" y="66.60" width="5.0" height="1.15" fill="#dcdcaa"/><rect x="72.0" y="66.60" width="1.0" height="1.15" fill="#d4d4d4"/><rect x="73.0" y="66.60" width="15.0" height="1.15" fill="#ce9178"/><rect x="88.0" y="66.60" width="1.0" height="1.15" fill="#d4d4d4"/><rect x="90.0" y="66.60" width="8.0" height="1.15" fill="#9cdcfe"/><rect x="98.0" y="66.60" width="2.0" height="1.15" fill="#d4d4d4"/><rect x="100.0" y="66.60" width="2.0" height="1.15" fill="#9cdcfe"/><rect x="102.0" y="66.60" width="1.0" height="1.15" fill="#d4d4d4"/><rect x="104.0" y="66.60" width="2.0" height="1.15" fill="#808080"/><rect x="106.0" y="66.60" width="1.0" height="1.15" fill="#ce9178"/><rect x="108.0" y="66.60" width="5.0" height="1.15" fill="#9cdcfe"/><rect x="113.0" y="66.60" width="1.0" height="1.15" fill="#d4d4d4"/><rect x="114.0" y="66.60" width="4.0" height="1.15" fill="#ce9178"/><rect x="119.0" y="66.60" width="6.0" height="1.15" fill="#ce9178"/><rect x="35.0" y="68.60" width="7.0" height="1.15" fill="#ce9178"/><rect x="42.0" y="68.60" width="1.0" height="1.15" fill="#808080"/><rect x="43.0" y="68.60" width="4.0" height="1.15" fill="#d4d4d4"/><rect x="47.0" y="68.60" width="2.0" height="1.15" fill="#808080"/><rect x="49.0" y="68.60" width="1.0" height="1.15" fill="#569cd6"/><rect x="50.0" y="68.60" width="1.0" height="1.15" fill="#808080"/><rect x="55.0" y="70.60" width="1.0" height="1.15" fill="#808080"/><rect x="56.0" y="70.60" width="4.0" height="1.15" fill="#569cd6"/><rect x="61.0" y="70.60" width="6.0" height="1.15" fill="#9cdcfe"/><rect x="67.0" y="70.60" width="1.0" height="1.15" fill="#d4d4d4"/><rect x="68.0" y="70.60" width="1.0" height="1.15" fill="#ce9178"/><rect x="69.0" y="70.60" width="2.0" height="1.15" fill="#808080"/><rect x="72.0" y="70.60" width="5.0" height="1.15" fill="#dcdcaa"/><rect x="77.0" y="70.60" width="1.0" height="1.15" fill="#d4d4d4"/><rect x="78.0" y="70.60" width="18.0" height="1.15" fill="#ce9178"/><rect x="96.0" y="70.60" width="1.0" height="1.15" fill="#d4d4d4"/><rect x="98.0" y="70.60" width="8.0" height="1.15" fill="#9cdcfe"/><rect x="106.0" y="70.60" width="2.0" height="1.15" fill="#d4d4d4"/><rect x="108.0" y="70.60" width="2.0" height="1.15" fill="#9cdcfe"/><rect x="110.0" y="70.60" width="1.0" height="1.15" fill="#d4d4d4"/><rect x="112.0" y="70.60" width="2.0" height="1.15" fill="#808080"/><rect x="114.0" y="70.60" width="1.0" height="1.15" fill="#ce9178"/><rect x="116.0" y="70.60" width="6.0" height="1.15" fill="#9cdcfe"/><rect x="122.0" y="70.60" width="1.0" height="1.15" fill="#d4d4d4"/><rect x="123.0" y="70.60" width="2.0" height="1.15" fill="#ce9178"/><rect x="59.0" y="72.60" width="5.0" height="1.15" fill="#569cd6"/><rect x="59.0" y="74.60" width="8.0" height="1.15" fill="#569cd6"/><rect x="67.0" y="74.60" width="8.0" height="1.15" fill="#ce9178"/><rect x="75.0" y="74.60" width="1.0" height="1.15" fill="#569cd6"/><rect x="59.0" y="76.60" width="1.0" height="1.15" fill="#808080"/><rect x="60.0" y="76.60" width="6.0" height="1.15" fill="#569cd6"/><rect x="67.0" y="76.60" width="4.0" height="1.15" fill="#9cdcfe"/><rect x="71.0" y="76.60" width="1.0" height="1.15" fill="#d4d4d4"/><rect x="72.0" y="76.60" width="8.0" height="1.15" fill="#ce9178"/><rect x="81.0" y="76.60" width="5.0" height="1.15" fill="#9cdcfe"/><rect x="86.0" y="76.60" width="1.0" height="1.15" fill="#d4d4d4"/><rect x="87.0" y="76.60" width="4.0" height="1.15" fill="#ce9178"/><rect x="92.0" y="76.60" width="10.0" height="1.15" fill="#ce9178"/><rect x="103.0" y="76.60" width="7.0" height="1.15" fill="#ce9178"/><rect x="111.0" y="76.60" width="7.0" height="1.15" fill="#9cdcfe"/><rect x="118.0" y="76.60" width="1.0" height="1.15" fill="#d4d4d4"/><rect x="119.0" y="76.60" width="6.0" height="1.15" fill="#ce9178"/><rect x="35.0" y="78.60" width="7.0" height="1.15" fill="#ce9178"/><rect x="43.0" y="78.60" width="1.0" height="1.15" fill="#ce9178"/><rect x="44.0" y="78.60" width="5.0" height="1.15" fill="#d4d4d4"/><rect x="49.0" y="78.60" width="2.0" height="1.15" fill="#808080"/><rect x="51.0" y="78.60" width="6.0" height="1.15" fill="#569cd6"/><rect x="57.0" y="78.60" width="1.0" height="1.15" fill="#808080"/><rect x="55.0" y="80.60" width="2.0" height="1.15" fill="#808080"/><rect x="57.0" y="80.60" width="4.0" height="1.15" fill="#569cd6"/><rect x="61.0" y="80.60" width="1.0" height="1.15" fill="#808080"/><rect x="51.0" y="82.60" width="2.0" height="1.15" fill="#808080"/><rect x="53.0" y="82.60" width="2.0" height="1.15" fill="#569cd6"/><rect x="55.0" y="82.60" width="1.0" height="1.15" fill="#808080"/><rect x="47.0" y="84.60" width="2.0" height="1.15" fill="#808080"/><rect x="49.0" y="84.60" width="2.0" height="1.15" fill="#569cd6"/><rect x="51.0" y="84.60" width="1.0" height="1.15" fill="#808080"/><rect x="31.0" y="86.60" width="11.0" height="1.15" fill="#569cd6"/><rect x="27.0" y="88.60" width="2.0" height="1.15" fill="#808080"/><rect x="29.0" y="88.60" width="5.0" height="1.15" fill="#569cd6"/><rect x="34.0" y="88.60" width="1.0" height="1.15" fill="#808080"/><rect x="23.0" y="90.60" width="2.0" height="1.15" fill="#808080"/><rect x="25.0" y="90.60" width="5.0" height="1.15" fill="#569cd6"/><rect x="30.0" y="90.60" width="1.0" height="1.15" fill="#808080"/><rect x="19.0" y="92.60" width="2.0" height="1.15" fill="#808080"/><rect x="21.0" y="92.60" width="3.0" height="1.15" fill="#569cd6"/><rect x="24.0" y="92.60" width="1.0" height="1.15" fill="#808080"/><rect x="15.0" y="94.60" width="11.0" height="1.15" fill="#569cd6"/></g></svg><div class="r" style="left:1899px;top:110px;width:1px;height:742px;background:#121212;"></div><div class="r" style="left:1900px;top:472.6px;width:16px;height:2px;background:#a0a0a0;"></div><div class="t" style="left:396.40px;top:867.42px;font-size:13.2px;line-height:13.2px;color:#9d9d9d;transform:scaleX(0.8813);transform-origin:0 0">PROBLEMS</div><div class="t" style="left:489.30px;top:867.42px;font-size:13.2px;line-height:13.2px;color:#9d9d9d;transform:scaleX(0.9130);transform-origin:0 0">OUTPUT</div><div class="t" style="left:567.70px;top:867.42px;font-size:13.2px;line-height:13.2px;color:#9d9d9d;transform:scaleX(0.8917);transform-origin:0 0">DEBUG CONSOLE</div><div class="t" style="left:698.90px;top:867.42px;font-size:13.2px;line-height:13.2px;color:#cccccc;transform:scaleX(0.9327);transform-origin:0 0">TERMINAL</div><div class="t" style="left:789.50px;top:867.42px;font-size:13.2px;line-height:13.2px;color:#9d9d9d;transform:scaleX(0.8406);transform-origin:0 0">PORTS</div><div class="r" style="left:697px;top:885.4px;width:67px;height:1.2px;background:#0078d4;"></div><svg class="s" style="left:1658px;top:863px;" width="22" height="22" viewBox="0 0 22 22"><rect x="2.4" y="3" width="17" height="15.6" rx="1.2" fill="none" stroke="#cccccc" stroke-width="1.25"/><path d="M6 8 L9.4 10.6 L6 13.2 M10.6 14.2 H15.2" fill="none" stroke="#cccccc" stroke-width="1.25"/></svg><div class="t" style="left:1683.80px;top:867.61px;font-size:14.4px;line-height:14.4px;color:#cccccc;transform:scaleX(0.9785);transform-origin:0 0">php</div><svg class="s" style="left:1714px;top:862px;" width="22" height="22" viewBox="0 0 22 22"><path d="M10.9 3 V18.6 M3 10.9 H18.8" stroke="#cccccc" stroke-width="1.35"/></svg><svg class="s" style="left:1738px;top:867.5px;" width="12" height="12" viewBox="0 0 12 12"><path d="M1.2 3.6 L5.3 7.8 L9.4 3.6" fill="none" stroke="#cccccc" stroke-width="1.15"/></svg><svg class="s" style="left:1761px;top:863px;" width="20" height="20" viewBox="0 0 20 20"><rect x="2.4" y="2.8" width="15.2" height="14.8" rx="1.4" fill="none" stroke="#cccccc" stroke-width="1.3"/><path d="M10 2.8 V17.6" stroke="#cccccc" stroke-width="1.3"/></svg><svg class="s" style="left:1788px;top:862px;" width="20" height="22" viewBox="0 0 20 22"><path d="M3.4 5.6 H16.6 M7.6 5.6 V3.6 H12.4 V5.6 M5 5.6 L5.8 18.2 H14.2 L15 5.6 M8.4 8.4 V15.6 M11.6 8.4 V15.6" fill="none" stroke="#cccccc" stroke-width="1.25"/></svg><svg class="s" style="left:1818px;top:866px;" width="22" height="14" viewBox="0 0 22 14"><circle cx="3.4" cy="7" r="1.3" fill="#cccccc"/><circle cx="9.6" cy="7" r="1.3" fill="#cccccc"/><circle cx="15.8" cy="7" r="1.3" fill="#cccccc"/></svg><svg class="s" style="left:1849px;top:865px;" width="18" height="14" viewBox="0 0 18 14"><path d="M2.8 10.6 L8.6 5.2 L14.4 10.6" fill="none" stroke="#cccccc" stroke-width="1.35"/></svg><svg class="s" style="left:1881px;top:865px;" width="16" height="16" viewBox="0 0 16 16"><path d="M2.6 3.4 L12.6 13.4 M12.6 3.4 L2.6 13.4" stroke="#cccccc" stroke-width="1.35"/></svg><div style="position:absolute;left:0;top:0;width:1916px;height:1040px;clip-path:inset(853px 0px 26px 373px)"><div class="r" style="left:415px;top:910.2px;width:54px;height:19.4px;background:#2472c8;"></div><div class="t" style="left:415.00px;top:915.01px;font-family:'Liberation Mono',monospace;font-size:15.0px;line-height:15.0px;color:#ffffff;"> INFO </div><div class="t" style="left:469.00px;top:915.01px;font-family:'Liberation Mono',monospace;font-size:15.0px;line-height:15.0px;color:#cccccc;"> Preparing database.</div><div class="t" style="left:415.00px;top:956.71px;font-family:'Liberation Mono',monospace;font-size:15.0px;line-height:15.0px;color:#cccccc;">Creating migration table</div><div class="t" style="left:640.00px;top:956.71px;font-family:'Liberation Mono',monospace;font-size:15.0px;line-height:15.0px;color:#808080;">............................................................................................................</div><div class="t" style="left:1621.00px;top:956.71px;font-family:'Liberation Mono',monospace;font-size:15.0px;line-height:15.0px;color:#808080;">23.34ms</div><div class="t" style="left:1693.00px;top:956.71px;font-family:'Liberation Mono',monospace;font-size:15.0px;line-height:15.0px;color:#23d18b;font-weight:bold;">DONE</div><div class="r" style="left:415px;top:993.0px;width:54px;height:21px;background:#2472c8;"></div><div class="t" style="left:415.00px;top:997.31px;font-family:'Liberation Mono',monospace;font-size:15.0px;line-height:15.0px;color:#ffffff;"> INFO </div><div class="t" style="left:469.00px;top:997.31px;font-family:'Liberation Mono',monospace;font-size:15.0px;line-height:15.0px;color:#cccccc;"> Running migrations.</div></div><div class="r" style="left:0px;top:1015px;width:37px;height:25px;background:#0078d4;"></div><svg class="s" style="left:8px;top:1017px;" width="18" height="18" viewBox="0 0 18 18"><path d="M3 6.8 L8.9 11.3 L3 15.8 M13.9 2 L8.3 6.6 L13.9 11.8" fill="none" stroke="#ffffff" stroke-width="1.3"/></svg><svg class="s" style="left:45px;top:1017px;" width="20" height="20" viewBox="0 0 20 20"><circle cx="9.8" cy="9.2" r="7.4" fill="none" stroke="#cccccc" stroke-width="1.3"/><path d="M6.8 6.2 L12.8 12.2 M12.8 6.2 L6.8 12.2" stroke="#cccccc" stroke-width="1.3"/></svg><div class="t" style="left:67.20px;top:1021.31px;font-size:14.4px;line-height:14.4px;color:#cccccc;">0</div><svg class="s" style="left:78px;top:1017px;" width="20" height="20" viewBox="0 0 20 20"><path d="M9.6 2.2 L17.4 16.6 H1.8 Z" fill="none" stroke="#cccccc" stroke-width="1.3" stroke-linejoin="round"/><path d="M9.6 7 V11.8" stroke="#cccccc" stroke-width="1.4"/><circle cx="9.6" cy="14" r="0.8" fill="#cccccc"/></svg><div class="t" style="left:99.40px;top:1021.31px;font-size:14.4px;line-height:14.4px;color:#cccccc;">0</div><div class="r" style="left:1216px;top:1015px;width:41px;height:25px;background:#35383c;"></div><svg class="s" style="left:1226px;top:1016px;" width="20" height="20" viewBox="0 0 20 20"><circle cx="8.4" cy="8.4" r="5.8" fill="none" stroke="#cccccc" stroke-width="1.3"/><path d="M12.6 12.6 L17.6 17.6" stroke="#cccccc" stroke-width="1.5"/><path d="M8.4 5.4 V11.4 M5.4 8.4 H11.4" stroke="#cccccc" stroke-width="1.3"/></svg><div class="t" style="left:1266.20px;top:1021.31px;font-size:14.4px;line-height:14.4px;color:#cccccc;transform:scaleX(0.9403);transform-origin:0 0">Ln 40, Col 33</div><div class="t" style="left:1366.60px;top:1021.31px;font-size:14.4px;line-height:14.4px;color:#cccccc;transform:scaleX(0.9094);transform-origin:0 0">Spaces: 4</div><div class="t" style="left:1444.80px;top:1021.31px;font-size:14.4px;line-height:14.4px;color:#cccccc;transform:scaleX(0.9073);transform-origin:0 0">UTF-8</div><div class="t" style="left:1501.60px;top:1021.31px;font-size:14.4px;line-height:14.4px;color:#cccccc;transform:scaleX(0.8326);transform-origin:0 0">CRLF</div><div class="t" style="left:1552.60px;top:1021.31px;font-size:14.4px;line-height:14.4px;color:#cccccc;transform:scaleX(0.8786);transform-origin:0 0">PHP</div><svg class="s" style="left:1596px;top:1017px;" width="22" height="20" viewBox="0 0 22 20"><path d="M3.6 9 C2.8 5.4 4.6 2.6 7.4 2.6 C9.2 2.6 10.6 3.2 11 4.2 C11.4 3.2 12.8 2.6 14.6 2.6 C17.4 2.6 19.2 5.4 18.4 9 L19.2 10.4 L19.2 14.4 C17.4 17.2 14.2 17.8 11 17.8 C7.8 17.8 4.6 17.2 2.8 14.4 L2.8 10.4 Z" fill="#cccccc"/><ellipse cx="7.6" cy="6.6" rx="2.2" ry="2.3" fill="#181818"/><ellipse cx="14.4" cy="6.6" rx="2.2" ry="2.3" fill="#181818"/><path d="M5.4 11.2 H16.6 V15 C14.2 16 7.8 16 5.4 15 Z" fill="#181818"/><rect x="8.3" y="11.6" width="1.5" height="3.2" fill="#cccccc"/><rect x="12.2" y="11.6" width="1.5" height="3.2" fill="#cccccc"/></svg><svg class="s" style="left:1634px;top:1016px;" width="18" height="22" viewBox="0 0 18 22"><circle cx="8.6" cy="8.6" r="1.8" fill="#cccccc"/><path d="M5.6 11.6 A4.2 4.2 0 1 1 11.6 11.6 M3.4 13.8 A7.3 7.3 0 1 1 13.8 13.8" fill="none" stroke="#cccccc" stroke-width="1.3"/><path d="M8.6 10.4 V19.6" stroke="#cccccc" stroke-width="2"/></svg><div class="t" style="left:1655.00px;top:1021.31px;font-size:14.4px;line-height:14.4px;color:#cccccc;transform:scaleX(0.9373);transform-origin:0 0">Go Live</div><div class="t" style="left:1720.60px;top:1021.31px;font-size:14.4px;line-height:14.4px;color:#cccccc;transform:scaleX(0.9393);transform-origin:0 0">8.2</div><svg class="s" style="left:1757px;top:1016px;" width="20" height="20" viewBox="0 0 20 20"><circle cx="13" cy="6.8" r="3.8" fill="none" stroke="#cccccc" stroke-width="1.3"/><path d="M10.2 9.6 L3 16.8 M5.2 14.6 L7.2 16.6 M3.4 16.4 L5 18" fill="none" stroke="#cccccc" stroke-width="1.3"/></svg><svg class="s" style="left:1793px;top:1016px;" width="20" height="20" viewBox="0 0 20 20"><circle cx="10" cy="10" r="7" fill="none" stroke="#cccccc" stroke-width="1.3"/><path d="M5 15 L15 5" stroke="#cccccc" stroke-width="1.3"/></svg><div class="t" style="left:1815.80px;top:1021.31px;font-size:14.4px;line-height:14.4px;color:#cccccc;transform:scaleX(1.0024);transform-origin:0 0">Prettier</div><svg class="s" style="left:1881px;top:1016px;" width="18" height="20" viewBox="0 0 18 20"><path d="M3 14.4 H15 L13.4 12.2 V8 C13.4 5.2 11.6 3.2 9 3.2 C6.4 3.2 4.6 5.2 4.6 8 V12.2 Z" fill="none" stroke="#cccccc" stroke-width="1.3" stroke-linejoin="round"/><path d="M7.4 16.4 Q9 18 10.6 16.4" fill="none" stroke="#cccccc" stroke-width="1.3"/></svg>
</body></html>
